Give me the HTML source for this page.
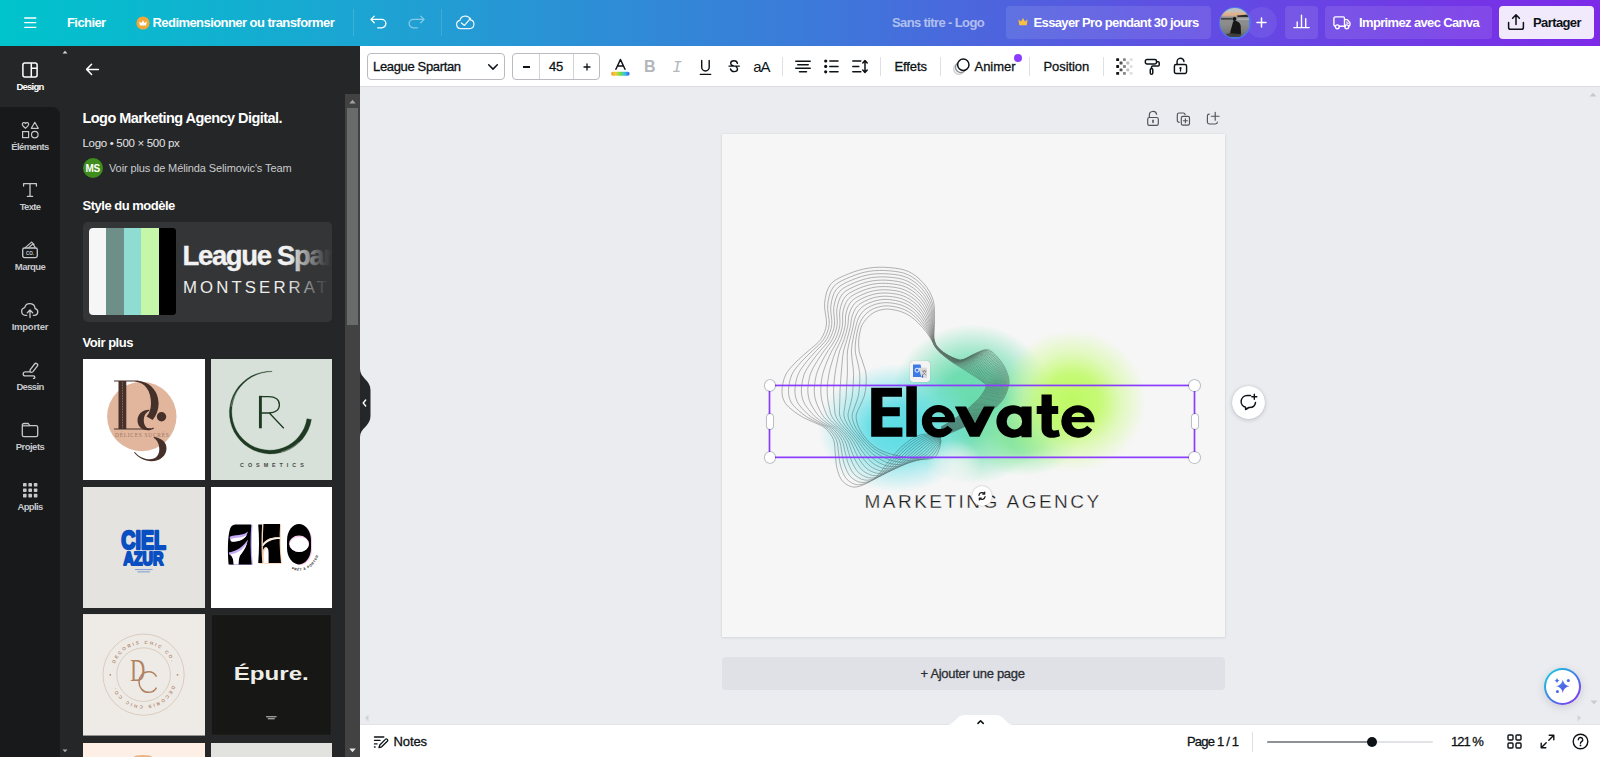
<!DOCTYPE html>
<html lang="fr">
<head>
<meta charset="utf-8">
<title>Sans titre - Logo</title>
<style>
*{box-sizing:border-box;margin:0;padding:0}
html,body{width:1600px;height:757px;overflow:hidden;background:#ebecf0}
body{font-family:"Liberation Sans",sans-serif;position:relative;color:#0d1216}
.abs{position:absolute}
.t{position:absolute;white-space:nowrap;line-height:1}
/* header */
#hdr{left:0;top:0;width:1600px;height:47px;background:linear-gradient(90deg,#00c4cc 0%,#1fa1d3 25%,#3b7bd9 50%,#5d51e2 72%,#7d2ae8 100%)}
#hdr .t{color:#fff;font-weight:bold;font-size:13px}
/* rail */
#rail{left:0;top:46px;width:60px;height:711px}
#rail .act{left:0;top:0;width:60px;height:61px;background:#252627}
#rail .rest{left:0;top:61px;width:60px;height:650px;background:#18191b;border-top-right-radius:8px}
#railbg{left:0;top:46px;width:60px;height:711px;background:#252627}
.rl{position:absolute;left:0;width:60px;text-align:center;font-size:9.500px;font-weight:bold;color:#c6c8cc;line-height:1;white-space:nowrap}
/* panel */
#panel{left:60px;top:46px;width:300px;height:711px;background:#252627;overflow:hidden}
/* toolbar */
#tb{left:360px;top:46px;width:1240px;height:41px;background:#fff;border-bottom:1px solid #dcdde1}
.tt{font-size:13px;color:#0d1216;-webkit-text-stroke:0.3px #0d1216}
/* canvas */
#cv{left:360px;top:87px;width:1240px;height:638px;background:#ebecf0;overflow:hidden}
/* footer */
#ft{left:360px;top:725px;width:1240px;height:32px;background:#fff;box-shadow:0 -1px 0 #e3e4e8}
#ft .t{font-size:13px;color:#0d1216}
.hd{position:absolute;width:10.500px;height:10.500px;border-radius:50%;background:#fff;box-shadow:0 0 0 .8px rgba(57,76,96,.35),0 0 2px rgba(57,76,96,.2)}
.hp{position:absolute;width:6px;height:15px;border-radius:3px;background:#fff;box-shadow:0 0 0 .8px rgba(57,76,96,.35),0 0 2px rgba(57,76,96,.2)}
</style>
</head>
<body>

<!-- HEADER -->
<div id="hdr" class="abs">
  <!-- hamburger -->
  <svg class="abs" style="left:24px;top:16px" width="13" height="13" viewBox="0 0 13 13"><path d="M0.700 2H11.800M0.700 6.600H11.800M0.700 11.300H11.800" stroke="#fff" stroke-width="1.350" stroke-linecap="round" fill="none"/></svg>
  <span class="t" style="left:67px;top:15.5px;letter-spacing:-0.58px">Fichier</span>
  <!-- crown coin -->
  <svg class="abs" style="left:135.5px;top:15.5px" width="14" height="14" viewBox="0 0 14 14"><circle cx="7" cy="7" r="6.6" fill="#f1a83a"/><path d="M3.9 9.6 3.3 5.5 5.4 7 7 4.2 8.6 7 10.7 5.5 10.1 9.6Z" fill="#fff"/></svg>
  <span class="t" style="left:152.5px;top:15.5px;letter-spacing:-0.56px">Redimensionner ou transformer</span>
  <div class="abs" style="left:353px;top:9px;width:1px;height:27px;background:rgba(255,255,255,.14)"></div>
  <!-- undo -->
  <svg class="abs" style="left:369px;top:13px" width="18" height="18" viewBox="0 0 18 18"><path d="M5.250 3.100 1.900 6.400l3.350 3.300M2.300 6.400h10.400a4.200 4.200 0 0 1 0 8.400H8.700" stroke="#fff" stroke-width="1.300" stroke-linecap="round" stroke-linejoin="round" fill="none"/></svg>
  <!-- redo -->
  <svg class="abs" style="left:408px;top:13px;opacity:.45" width="18" height="18" viewBox="0 0 18 18"><path d="M12.750 3.100 16.100 6.400l-3.350 3.300M15.700 6.400H5.300a4.200 4.200 0 0 0 0 8.400H9.300" stroke="#fff" stroke-width="1.300" stroke-linecap="round" stroke-linejoin="round" fill="none"/></svg>
  <div class="abs" style="left:441px;top:9px;width:1px;height:27px;background:rgba(255,255,255,.14)"></div>
  <!-- cloud check -->
  <svg class="abs" style="left:455px;top:12px;opacity:.92" width="20" height="20" viewBox="0 0 20 20"><path d="M5.700 16.600a4.150 4.150 0 0 1-.800-8.200 5.500 5.500 0 0 1 10.500-.600 4.450 4.450 0 0 1-.700 8.800Z" stroke="#fff" stroke-width="1.200" stroke-linejoin="round" fill="none"/><path d="M6.400 10.900l3.100 2.500 6-7.100" stroke="#fff" stroke-width="1.300" stroke-linecap="round" stroke-linejoin="round" fill="none"/></svg>

  <span class="t" style="left:892px;top:15.5px;letter-spacing:-0.62px;color:rgba(255,255,255,.58)">Sans titre - Logo</span>
  <!-- essayer pro -->
  <div class="abs" style="left:1006px;top:6px;width:205px;height:33px;border-radius:4px;background:rgba(255,255,255,.1)"></div>
  <svg class="abs" style="left:1017.5px;top:17px" width="10" height="9" viewBox="0 0 10 9"><path d="M1.3 8.2 0.4 2.6 3 4.6 5 1 7 4.6 9.6 2.6 8.7 8.2Z" fill="#fbbf3f"/></svg>
  <span class="t" style="left:1033.5px;top:15.5px;letter-spacing:-0.63px">Essayer Pro pendant 30 jours</span>
  <!-- avatar -->
  <div class="abs" style="left:1246px;top:7px;width:31px;height:31px;border-radius:50%;background:rgba(255,255,255,.07)"></div>
  <div class="abs" style="left:1218.500px;top:6.500px;width:32px;height:32px;border-radius:50%;background:#4f78ee"></div>
  <svg class="abs" style="left:1219.800px;top:7.700px" width="29.600" height="29.600" viewBox="0 0 30 30"><defs><clipPath id="avc"><circle cx="15" cy="15" r="15"/></clipPath><linearGradient id="avg" x1="0" y1="0" x2="0" y2="1"><stop offset="0" stop-color="#b9c1c4"/><stop offset=".12" stop-color="#c2c2bb"/><stop offset=".18" stop-color="#e0b491"/><stop offset=".27" stop-color="#d4a988"/><stop offset=".30" stop-color="#8f8f90"/><stop offset=".55" stop-color="#8c8c8c"/><stop offset=".8" stop-color="#7b7b7b"/><stop offset="1" stop-color="#5c5c5c"/></linearGradient></defs><g clip-path="url(#avc)"><rect width="30" height="30" fill="url(#avg)"/><path d="M17 7.500 30 6.500V9L18 9.200Z" fill="#2b2b2b"/><path d="M1 10.400h11.500v1.200H1Z" fill="#2a2a2a"/><path d="M16 10.800h14v.9H16Z" fill="#c9ced0"/><circle cx="14.700" cy="11.200" r="2" fill="#141414"/><path d="M13.300 13.700c1.300-.6 2.800-.6 4.200 0 2.200.9 3.300 2.200 3.500 4.600l.3 7.700c-3 1.200-7.500 1.200-11 0l.3-2.500c.8-2.800 1.700-6 2.700-9.800Z" fill="#171717"/><path d="M5 27c3-1.500 6-2 9-1.500l8 1-2 3.500H8Z" fill="#3a3a3a" opacity=".8"/></g></svg>
  <svg class="abs" style="left:1256px;top:17px" width="11" height="11" viewBox="0 0 11 11"><path d="M5.500 1v9M1 5.500h9" stroke="#fff" stroke-width="1.5" stroke-linecap="round"/></svg>
  <!-- chart button -->
  <div class="abs" style="left:1285px;top:6px;width:33px;height:33px;border-radius:4px;background:rgba(255,255,255,.1)"></div>
  <svg class="abs" style="left:1293px;top:13.300px" width="17" height="16" viewBox="0 0 17 16"><path d="M0.800 14.600H16.200M4.200 14.300V9M8.500 14.300V2.200M12.700 14.300V5.600" stroke="#fff" stroke-width="1.400" stroke-linecap="round" fill="none"/></svg>
  <!-- print -->
  <div class="abs" style="left:1325px;top:6px;width:167px;height:33px;border-radius:4px;background:rgba(255,255,255,.1)"></div>
  <svg class="abs" style="left:1332.900px;top:15.400px" width="18.400" height="15.640" viewBox="0 0 20 17"><path d="M1 3.6a1.6 1.6 0 0 1 1.6-1.6h8.3a1.6 1.6 0 0 1 1.6 1.6v8.7H6.9M1 3.6v7.1a1.6 1.6 0 0 0 1.5 1.6M12.5 5h3.1l2.9 3.6v2.1a1.6 1.6 0 0 1-1.5 1.6M12.5 12.3h1" stroke="#fff" stroke-width="1.5" stroke-linejoin="round" stroke-linecap="round" fill="none"/><circle cx="4.7" cy="12.9" r="2.1" stroke="#fff" stroke-width="1.5" fill="none"/><circle cx="15" cy="12.9" r="2.1" stroke="#fff" stroke-width="1.5" fill="none"/><path d="M15.2 7v2h2" stroke="#fff" stroke-width="1.2" fill="none"/></svg>
  <span class="t" style="left:1359px;top:15.5px;letter-spacing:-0.64px">Imprimez avec Canva</span>
  <!-- share -->
  <div class="abs" style="left:1499px;top:6px;width:95px;height:33px;border-radius:4px;background:#f1eafd"></div>
  <svg class="abs" style="left:1507px;top:13px" width="18" height="18" viewBox="0 0 18 18"><path d="M9 11.6V2M5.6 5.2 9 1.8l3.4 3.4M1.6 9.4v5a1.8 1.8 0 0 0 1.8 1.8h11.2a1.8 1.8 0 0 0 1.8-1.8v-5" stroke="#0d1216" stroke-width="1.5" stroke-linecap="round" stroke-linejoin="round" fill="none"/></svg>
  <span class="t" style="left:1533px;top:15.5px;letter-spacing:-0.6px;color:#0d1216">Partager</span>
</div>

<!-- RAIL -->
<div id="railbg" class="abs"></div>
<div id="rail" class="abs">
  <div class="abs act"></div>
  <div class="abs rest"></div>
</div>

<!-- PANEL -->
<div id="panel" class="abs">
</div>


<!-- RAIL CONTENT (page coords) -->
<div id="railx" class="abs" style="left:0;top:0;width:0;height:0">
  <!-- design -->
  <svg class="abs" style="left:22px;top:62px" width="16" height="16" viewBox="0 0 16 16"><rect x="0.900" y="0.900" width="14.200" height="14.200" rx="2" stroke="#fff" stroke-width="1.500" fill="none"/><path d="M9.300 1v14M9.300 6.200H15" stroke="#fff" stroke-width="1.500" fill="none"/></svg>
  <span class="rl" style="top:81.8px;color:#fff;letter-spacing:-0.78px">Design</span>
  <!-- elements -->
  <svg class="abs" style="left:20.500px;top:121px" width="19" height="18" viewBox="0 0 19 18"><path d="M4.500 7.300C2.600 5.900 1.300 4.700 1.300 3.300a1.700 1.700 0 0 1 3.200-.800 1.700 1.700 0 0 1 3.200.800c0 1.400-1.300 2.600-3.200 4Z" stroke="#c6c8cc" stroke-width="1.200" stroke-linejoin="round" fill="none"/><path d="M13.800 1.300 17.300 7.300H10.300Z" stroke="#c6c8cc" stroke-width="1.200" stroke-linejoin="round" fill="none"/><rect x="1.600" y="10.600" width="6" height="6" stroke="#c6c8cc" stroke-width="1.200" fill="none"/><circle cx="13.800" cy="13.600" r="3.300" stroke="#c6c8cc" stroke-width="1.200" fill="none"/></svg>
  <span class="rl" style="top:141.8px;letter-spacing:-0.61px">Éléments</span>
  <!-- texte -->
  <svg class="abs" style="left:22px;top:182px" width="16" height="16" viewBox="0 0 16 16"><path d="M1.600 4V1.700h12.800V4M8 1.700v12.600M5.400 14.400h5.200" stroke="#c6c8cc" stroke-width="1.300" stroke-linecap="round" stroke-linejoin="round" fill="none"/></svg>
  <span class="rl" style="top:201.8px;letter-spacing:-0.68px">Texte</span>
  <!-- marque -->
  <svg class="abs" style="left:21px;top:240px" width="18" height="19" viewBox="0 0 18 19"><rect x="1.700" y="8" width="14.600" height="9.600" rx="1.800" stroke="#c6c8cc" stroke-width="1.300" fill="none"/><path d="M4.300 7.600 10.600 2.100l2.400 2.300M7.600 7.600l4.300-3.600 2.300 3.400" stroke="#c6c8cc" stroke-width="1.200" stroke-linejoin="round" stroke-linecap="round" fill="none"/><text x="9" y="14.600" font-family="Liberation Sans" font-size="4.600" font-weight="bold" fill="#c6c8cc" text-anchor="middle">CO.</text></svg>
  <span class="rl" style="top:261.8px;letter-spacing:-0.58px">Marque</span>
  <!-- importer -->
  <svg class="abs" style="left:20px;top:301px" width="20" height="18" viewBox="0 0 20 18"><path d="M6.800 14.300H5.400a3.900 3.900 0 0 1-.700-7.700 5.300 5.300 0 0 1 10.400 1 3.400 3.400 0 0 1-.300 6.700h-1.500" stroke="#c6c8cc" stroke-width="1.300" stroke-linecap="round" stroke-linejoin="round" fill="none"/><path d="M10 16.600V9.300M7.300 11.700 10 9l2.700 2.700" stroke="#c6c8cc" stroke-width="1.300" stroke-linecap="round" stroke-linejoin="round" fill="none"/></svg>
  <span class="rl" style="top:321.8px;letter-spacing:-0.25px">Importer</span>
  <!-- dessin -->
  <svg class="abs" style="left:21px;top:362px" width="18" height="17" viewBox="0 0 18 17"><path d="M9.300 7.600 13.600 2a1.700 1.700 0 0 1 2.700 2.100L12 9.600a2.600 2.600 0 0 1-2 .700l-.900-.700a2.600 2.600 0 0 1 .200-2Z" stroke="#c6c8cc" stroke-width="1.300" stroke-linejoin="round" fill="none"/><path d="M8.600 9.900H4.200a2 2 0 0 0 0 4h8.300a1.300 1.300 0 0 1 0 2.600" stroke="#c6c8cc" stroke-width="1.300" stroke-linecap="round" fill="none"/></svg>
  <span class="rl" style="top:381.8px;letter-spacing:-0.67px">Dessin</span>
  <!-- projets -->
  <svg class="abs" style="left:21px;top:422px" width="18" height="16" viewBox="0 0 18 16"><path d="M1.300 3.100A1.600 1.600 0 0 1 2.900 1.500h4.400l1.400 2.200h6.400a1.600 1.600 0 0 1 1.600 1.600v7.800a1.600 1.600 0 0 1-1.600 1.600H2.900a1.600 1.600 0 0 1-1.600-1.600Z" stroke="#c6c8cc" stroke-width="1.300" stroke-linejoin="round" fill="none"/><path d="M1.600 3.800h7" stroke="#c6c8cc" stroke-width="1.200" fill="none"/></svg>
  <span class="rl" style="top:441.8px;letter-spacing:-0.50px">Projets</span>
  <!-- applis -->
  <svg class="abs" style="left:23px;top:483px" width="15" height="15" viewBox="0 0 15 15"><g fill="#c6c8cc"><rect x="0" y="0" width="3.600" height="3.600" rx=".7"/><rect x="5.400" y="0" width="3.600" height="3.600" rx=".7"/><rect x="10.800" y="0" width="3.600" height="3.600" rx=".7"/><rect x="0" y="5.400" width="3.600" height="3.600" rx=".7"/><rect x="5.400" y="5.400" width="3.600" height="3.600" rx=".7"/><rect x="10.800" y="5.400" width="3.600" height="3.600" rx=".7"/><rect x="0" y="10.800" width="3.600" height="3.600" rx=".7"/><rect x="5.400" y="10.800" width="3.600" height="3.600" rx=".7"/><rect x="10.800" y="10.800" width="3.600" height="3.600" rx=".7"/></g></svg>
  <span class="rl" style="top:501.8px;letter-spacing:-0.67px">Applis</span>
</div>

<!-- PANEL CONTENT (page coords) -->
<div id="panelx" class="abs" style="left:0;top:0;width:0;height:0">
  <svg class="abs" style="left:62px;top:50px" width="6" height="4" viewBox="0 0 6 4"><path d="M0.500 3.500 3 .800 5.500 3.500Z" fill="#d6d7d9"/></svg>
  <!-- back arrow -->
  <svg class="abs" style="left:85px;top:62px" width="15" height="15" viewBox="0 0 15 15"><path d="M6.600 2.300 1.600 7.400l5 5.100M2 7.400h11.400" stroke="#fff" stroke-width="1.500" stroke-linecap="round" stroke-linejoin="round" fill="none"/></svg>
  <span class="t" style="left:82.500px;top:110.800px;font-size:14.500px;font-weight:bold;color:#fff;letter-spacing:-0.560px">Logo Marketing Agency Digital.</span>
  <span class="t" style="left:82.500px;top:137.800px;font-size:11.500px;color:#e4e5e7;letter-spacing:-0.310px">Logo • 500 × 500 px</span>
  <div class="abs" style="left:82.500px;top:158px;width:20px;height:20px;border-radius:50%;background:#3f8d1d"></div>
  <span class="t" style="left:85.500px;top:163.500px;font-size:10px;font-weight:bold;color:#fff;letter-spacing:-0.300px">MS</span>
  <span class="t" style="left:109px;top:162.500px;font-size:11px;color:#c9cbce;letter-spacing:-0.110px">Voir plus de Mélinda Selimovic's Team</span>
  <span class="t" style="left:82.500px;top:198.500px;font-size:13px;font-weight:bold;color:#fff;letter-spacing:-0.490px">Style du modèle</span>
  <!-- style card -->
  <div class="abs" style="left:82.500px;top:221.500px;width:249.500px;height:100px;border-radius:5px;background:#343536;overflow:hidden">
    <div class="abs" style="left:6.500px;top:6.500px;width:87px;height:87px;border-radius:4px;overflow:hidden;background:#000">
      <div class="abs" style="left:0;top:0;width:17.400px;height:87px;background:#f6f6f6"></div>
      <div class="abs" style="left:17.400px;top:0;width:17.400px;height:87px;background:#6e8f88"></div>
      <div class="abs" style="left:34.800px;top:0;width:17.400px;height:87px;background:#8fdcd3"></div>
      <div class="abs" style="left:52.200px;top:0;width:17.400px;height:87px;background:#c5f7a8"></div>
      <div class="abs" style="left:69.600px;top:0;width:17.400px;height:87px;background:#000"></div>
    </div>
    <span class="t" style="left:100px;top:20.300px;font-size:27.500px;font-weight:bold;color:#f2f2f2;letter-spacing:-1.350px;-webkit-text-stroke:.35px #f2f2f2">League Spartan</span>
    <span class="t" style="left:100.500px;top:58.300px;font-size:16.800px;color:#ececec;letter-spacing:3.100px">MONTSERRAT</span>
    <div class="abs" style="left:205px;top:0;width:45px;height:100px;background:linear-gradient(90deg,rgba(52,53,54,0) 0%,rgba(52,53,54,.9) 80%,#343536 100%)"></div>
  </div>
  <span class="t" style="left:82.500px;top:335.500px;font-size:13px;font-weight:bold;color:#fff;letter-spacing:-0.460px">Voir plus</span>
  <!-- scrollbar -->
  <div class="abs" style="left:345px;top:93.500px;width:15px;height:664px;background:#424242"></div>
  <div class="abs" style="left:347px;top:107.500px;width:11px;height:217.500px;background:#696a6a"></div>
  <svg class="abs" style="left:349px;top:98.500px" width="7" height="5" viewBox="0 0 7 5"><path d="M0.300 4.500 3.500 .700 6.700 4.500Z" fill="#a3a3a3"/></svg>
  <svg class="abs" style="left:349px;top:747.500px" width="7" height="5" viewBox="0 0 7 5"><path d="M0.300 .500 3.500 4.300 6.700 .500Z" fill="#e6e6e6"/></svg>
  <svg class="abs" style="left:62px;top:748.500px" width="6" height="4" viewBox="0 0 6 4"><path d="M0.500 .500 3 3.200 5.500 .500Z" fill="#aaabad"/></svg>
</div>


<!-- THUMBNAILS (page coords) -->
<div id="thx" class="abs" style="left:0;top:0;width:0;height:0">
  <!-- 1 DG -->
  <svg class="abs" style="left:82.500px;top:358.500px" width="122" height="121.500" viewBox="0 0 122 121.500">
    <rect width="122" height="121.500" fill="#fff"/>
    <circle cx="58.800" cy="57.500" r="34.700" fill="#e1b69d"/>
    <g fill="#46302a">
      <path d="M31 21.400H52C65 21.400 75.600 30.500 75.600 44.500c0 6.500-2.300 12-6 16.500l-6-3.500c3-3.500 4.400-8 4.400-13.500 0-11.500-5.500-21-16.500-21.600H43.300V69.400H68v1H31v-1h4.500V22.400H31Z"/>
      <circle cx="78.500" cy="57.700" r="4.700"/>
      <path d="M66 50.700c-6.500 0-11.500 4.500-11.500 10.700 0 5.800 4.500 9.800 10.300 9.800 2.300 0 4.500-.6 6.200-1.800l-.6-.9c-1 .6-2.300.9-3.600.9-3.600 0-6-3.300-6-8 0-4.500 2-8.500 5.800-9.700Z"/>
      <path transform="translate(-1 -2.300)" d="M72.500 80.300c7 1.200 12 5.200 12 11.200 0 7.600-6.600 13-15 13-7 0-13.500-3.500-17.500-8.700l.8-.6c3.600 4.300 9 7.300 15 7.300 6 0 9.500-4.300 9.500-9.800 0-5.400-2.300-9.700-6-11.600Z"/>
    </g>
    <path d="M39.500 23v46" stroke="#e1b69d" stroke-width=".5" stroke-dasharray=".8 .8"/>
    <text x="59.300" y="77.500" font-family="Liberation Serif" font-size="5.400" fill="#9a7560" text-anchor="middle" letter-spacing=".750">DÉLICES SUCRÉS</text>
  </svg>
  <!-- 2 R cosmetics -->
  <svg class="abs" style="left:211px;top:358.500px" width="121" height="121.500" viewBox="0 0 121 121.500">
    <rect width="121" height="121.500" fill="#d7e1d9"/>
    <path d="M61.1 12.3 55.7 12.5 50.4 13.4 45.2 14.9 40.3 17.1 35.7 20.0 31.5 23.4 27.8 27.3 24.7 31.7 22.1 36.5 20.2 41.5 19.0 46.8 18.4 52.2 18.6 57.6 19.5 62.9 21.0 68.1 23.2 73.0 26.1 77.6 29.5 81.8 33.4 85.5 37.8 88.6 42.6 91.2 47.6 93.1 52.9 94.3 58.3 94.9 63.7 94.7 69.0 93.8 74.2 92.3 79.1 90.1 83.7 87.2 87.9 83.8 91.6 79.9 94.7 75.5 97.3 70.7 99.2 65.7 100.4 60.4 100.4 60.4 L95.9 59.7 95.9 59.7 94.9 64.3 93.2 68.9 91.0 73.1 88.2 77.1 85.0 80.7 81.3 83.8 77.2 86.5 72.8 88.6 68.1 90.1 63.3 91.0 58.4 91.2 53.5 90.8 48.6 89.8 43.9 88.2 39.5 85.9 35.4 83.1 31.7 79.8 28.4 75.9 25.6 71.7 23.5 67.2 21.9 62.3 21.0 57.3 20.7 52.2 21.1 47.1 22.2 42.1 23.8 37.3 26.1 32.6 29.0 28.3 32.4 24.4 36.4 20.9 40.8 18.0 45.5 15.7 50.6 14.0 55.8 13.0 61.1 12.6Z" fill="#1e3a22" stroke="#1e3a22" stroke-width=".3" stroke-linejoin="round"/>
    <path d="M28 30c-4 5-7 11-8 18M30 88c5 3 11 5.500 17 6.300M70 93c7-2 13-5 18-10" stroke="#d7e1d9" stroke-width=".5" fill="none" opacity=".7"/>
    <path d="M49.400 69.300V36.800" stroke="#1e3a22" stroke-width="2.900" fill="none"/>
    <path d="M49.200 37.600h8.600c6.600 0 10.600 3.100 10.600 8.200s-4 8.200-10.600 8.200H49.200M58.300 54 72.800 69.300" stroke="#1e3a22" stroke-width="1.300" fill="none"/>
    <text x="62.900" y="107.900" font-family="Liberation Sans" font-size="5.400" font-weight="bold" fill="#454845" text-anchor="middle" letter-spacing="3.950">COSMETICS</text>
  </svg>
  <!-- 3 ciel azur -->
  <svg class="abs" style="left:82.500px;top:487px" width="122" height="121" viewBox="0 0 122 121">
    <rect width="122" height="121" fill="#e4e3df"/>
    <g font-family="Liberation Sans" font-weight="bold" fill="#0a4fc2" stroke="#0a4fc2" stroke-linejoin="round" text-anchor="middle">
      <text x="60.600" y="62" font-size="25.500" stroke-width="2.400" textLength="44.500" lengthAdjust="spacingAndGlyphs">CIEL</text>
      <text x="60.400" y="78.200" font-size="17.800" stroke-width="2.100" textLength="40" lengthAdjust="spacingAndGlyphs">AZUR</text>
    </g>
    <rect x="52" y="82" width="17.500" height="1.100" fill="#2a63c9" opacity=".5"/>
    <rect x="54.500" y="84.300" width="12.500" height="1.100" fill="#2a63c9" opacity=".5"/>
  </svg>
  <!-- 4 AKO -->
  <svg class="abs" style="left:211px;top:487px" width="121" height="121" viewBox="0 0 121 121">
    <rect width="121" height="121" fill="#fff"/>
    <!-- A -->
    <path d="M17.600 77.400C16.500 65 16.500 50 19 42C20 38.500 22.500 37.400 25.300 37.400H40.300C39.300 50 39.300 65 40.600 77.400Z" fill="#c3a9f6" transform="translate(1.200 .700)"/>
    <path d="M17.600 77.400C16.500 65 16.500 50 19 42C20 38.500 22.500 37.400 25.300 37.400H40.300C39.300 50 39.300 65 40.600 77.400Z" fill="#000"/>
    <path d="M18.800 49.800C24 47 32 49.300 36.900 44.500C35.800 51.500 28 55 20 54.600C19 53.300 18.700 51.500 18.800 49.800Z" fill="#c3a9f6"/>
    <path d="M19.800 52C25 50.300 31 51.300 35.800 48C33.800 52.500 27 55 20.500 54.600Z" fill="#fff"/>
    <path d="M18 65.500C26 64 33 59 36.900 52.500C36 60 31 66 28.700 69C27.800 72 27.500 75 27.500 77.400H22.700C22.600 73 21.500 69 18 67.300Z" fill="#c3a9f6"/>
    <path d="M19.500 67.300C27 66.300 32.500 62 35.800 56.300C34.500 62 30.500 66.500 28.700 69C27.800 72 27.500 75 27.500 77.400H22.700C22.600 73 21.800 69.500 19.500 67.300Z" fill="#fff"/>
    <!-- K -->
    <g transform="translate(1.100 .700)" fill="#f9d2ad"><path d="M47.200 37.400H51.100C50.300 50 50.300 64 51.300 76H47.200C48.300 63 48.300 50 47.200 37.400Z"/><path d="M52.400 37H69.100C68.300 50 68.500 63 70 76H52.200C51.700 63 51.700 50 52.400 37Z"/></g>
    <path d="M47.200 37.400H51.100C50.300 50 50.300 64 51.300 76H47.200C48.300 63 48.300 50 47.200 37.400Z" fill="#000"/>
    <path d="M52.400 37H69.100C68.300 50 68.500 63 70 76H52.200C51.700 63 51.700 50 52.400 37Z" fill="#000"/>
    <path d="M51.700 57.500C54 52.500 60 50 69 50.200L69 52C61 52 55.500 54.500 52 59.500Z" fill="#fff"/>
    <path d="M51.700 57.500C54 52.500 60 50 69 50.200L69 50.900C60.500 50.800 54.500 53.300 51.800 58.500Z" fill="#f9d2ad"/>
    <path d="M52 76V66C52 62 53.500 60.300 55 60.300C56.700 60.300 57.600 62.500 57.600 66V76Z" fill="#fff"/>
    <path d="M52 66C52 62 53.500 60.300 55 60.300C55.600 60.300 56 60.500 56.400 61C54.500 61.300 53 63 52.800 66.500V76H52Z" fill="#f9d2ad"/>
    <!-- O -->
    <rect x="77.100" y="37.700" width="24" height="40.400" rx="12" ry="16.500" fill="#f6c9ea"/>
    <rect x="76" y="37" width="24" height="40.400" rx="12" ry="16.500" fill="#000"/>
    <ellipse cx="88" cy="56.800" rx="9.900" ry="8.200" fill="#f6c9ea"/>
    <ellipse cx="88.300" cy="57.500" rx="9.500" ry="7.600" fill="#fff"/>
    <path id="pp" d="M79.500 81.500c13 7 27-3 28.500-16.500" fill="none"/>
    <text font-family="Liberation Sans" font-size="3.400" font-weight="bold" fill="#222" letter-spacing=".550"><textPath href="#pp" startOffset="1">PRÊT À PORTER</textPath></text>
  </svg>
  <!-- 5 DC -->
  <svg class="abs" style="left:82.600px;top:614.400px" width="122" height="121.600" viewBox="0 0 122 121.500">
    <rect width="122" height="121.500" fill="#eeebe7"/>
    <circle cx="60.600" cy="60.600" r="40.600" stroke="#cdb5a1" stroke-width=".600" fill="none"/>
    <circle cx="60.600" cy="60.600" r="26.800" stroke="#cdb5a1" stroke-width=".600" fill="none"/>
    <path id="dcT" d="M29.800 60.600a30.800 30.800 0 0 1 61.600 0" fill="none"/>
    <path id="dcB" d="M91.400 60.600a30.800 30.800 0 0 1-61.600 0" fill="none"/>
    <g font-family="Liberation Sans" font-size="4.700" font-weight="bold" fill="#b58d72" letter-spacing="1.900">
      <text><textPath href="#dcT" startOffset="11">DECORIS CHIC CO.</textPath></text>
      <text><textPath href="#dcB" startOffset="11">DECORIS CHIC CO.</textPath></text>
    </g>
    <circle cx="27.300" cy="60.800" r=".900" fill="#b58d72"/><circle cx="94.500" cy="60.800" r=".900" fill="#b58d72"/>
    <text x="47.300" y="67.300" font-family="Liberation Serif" font-size="31" fill="#b08363" textLength="15" lengthAdjust="spacingAndGlyphs">D</text>
    <path d="M73.500 62.500c-1.600-3-4.500-4.800-8-4.800-5.500 0-9.500 4.500-9.500 10.300s4 10.300 9.500 10.300c3.500 0 6.400-1.800 8-4.800" stroke="#b08363" stroke-width="1.500" fill="none"/>
  </svg>
  <!-- 6 Epure -->
  <svg class="abs" style="left:211.300px;top:614.200px" width="120.500" height="121.800" viewBox="0 0 121 121.500">
    <rect width="121" height="121.500" fill="#2a2b2b"/>
    <rect x=".700" y=".700" width="119.600" height="120.100" fill="#171715"/>
    <text x="60.500" y="66" font-family="Liberation Sans" font-weight="bold" font-size="18" fill="#eeeee9" text-anchor="middle" textLength="75.500" lengthAdjust="spacingAndGlyphs">Épure.</text>
    <rect x="55.300" y="102.300" width="10.500" height="1" fill="#cfcfca"/><rect x="57" y="104.300" width="7" height="1" fill="#cfcfca"/>
  </svg>
  <!-- 7, 8 -->
  <div class="abs" style="left:82.500px;top:743px;width:122px;height:20px;background:#fdeee6"></div>
  <div class="abs" style="left:134px;top:755px;width:18px;height:4px;border-radius:50%;background:#e9b382"></div>
  <div class="abs" style="left:211px;top:743px;width:121px;height:20px;background:#e2e2de"></div>
</div>

<!-- TOOLBAR -->
<div id="tb" class="abs">
</div>


<!-- TOOLBAR CONTENT (page coords) -->
<div id="tbx" class="abs" style="left:0;top:0;width:0;height:0">
  <div class="abs" style="left:367px;top:53px;width:138px;height:27px;border:1px solid #b9bbc0;border-radius:4px;background:#fff"></div>
  <span class="t tt" style="left:373px;top:60px;letter-spacing:-0.34px">League Spartan</span>
  <svg class="abs" style="left:487px;top:63px" width="12" height="8" viewBox="0 0 12 8"><path d="M1.7 1.8 6 6.1l4.3-4.3" stroke="#0d1216" stroke-width="1.5" stroke-linecap="round" stroke-linejoin="round" fill="none"/></svg>
  <div class="abs" style="left:512px;top:53px;width:88px;height:27px;border:1px solid #b9bbc0;border-radius:4px;background:#fff"></div>
  <div class="abs" style="left:539px;top:54px;width:1px;height:25px;background:#d2d4d8"></div>
  <div class="abs" style="left:573px;top:54px;width:1px;height:25px;background:#d2d4d8"></div>
  <div class="abs" style="left:522.5px;top:66px;width:7px;height:1.5px;background:#0d1216"></div>
  <span class="t tt" style="left:549px;top:60px;letter-spacing:-0.2px">45</span>
  <svg class="abs" style="left:581.500px;top:62px" width="10" height="10" viewBox="0 0 10 10"><path d="M2 5h6M5 2v6" stroke="#0d1216" stroke-width="1.300" stroke-linecap="round"/></svg>
  <!-- text colour A -->
  <svg class="abs" style="left:610px;top:58px" width="21" height="19" viewBox="0 0 21 19"><path d="M5.900 11.300 10.450 1.500 15 11.300M7.400 8.100h6.100" stroke="#0d1216" stroke-width="1.500" stroke-linejoin="round" stroke-linecap="round" fill="none"/><defs><linearGradient id="rb" x1="0" x2="1" y1="0" y2="0"><stop offset="0" stop-color="#f59a3c"/><stop offset=".25" stop-color="#f3cf2c"/><stop offset=".5" stop-color="#6fdc4a"/><stop offset=".75" stop-color="#2fc4e6"/><stop offset="1" stop-color="#3a55e8"/></linearGradient></defs><rect x="1" y="13.800" width="18.600" height="4" rx="2" fill="url(#rb)"/></svg>
  <!-- B -->
  <span class="t" style="left:644px;top:59.300px;font-size:16px;font-weight:bold;color:#b3b6ba;letter-spacing:-1px">B</span>
  <!-- I -->
  <span class="t" style="left:672.300px;top:60px;font-size:16px;font-style:italic;color:#b3b6ba;font-family:'Liberation Mono',monospace">I</span>
  <!-- U -->
  <svg class="abs" style="left:699px;top:59px" width="13" height="17" viewBox="0 0 13 17"><path d="M2.700 1.500v6.700a3.750 3.750 0 0 0 7.500 0V1.500M1.300 15.400h10.400" stroke="#0d1216" stroke-width="1.400" stroke-linecap="round" fill="none"/></svg>
  <!-- S -->
  <svg class="abs" style="left:727px;top:59px" width="14" height="15" viewBox="0 0 14 15"><path d="M10.400 4.300C10.100 2.700 8.800 1.800 7 1.800c-1.900 0-3.300.9-3.300 2.500 0 1.400 1 2.100 2.900 2.600M3.500 10c.4 1.700 1.700 2.600 3.600 2.600s3.400-.9 3.400-2.600c0-.9-.4-1.500-1.200-2M2 7.100h10.300" stroke="#0d1216" stroke-width="1.400" stroke-linecap="round" fill="none"/></svg>
  <!-- aA -->
  <span class="t" style="left:753.300px;top:59.200px;font-size:15px;letter-spacing:-1.100px;color:#0d1216">aA</span>
  <div class="abs" style="left:782px;top:57px;width:1px;height:19px;background:#dfe0e3"></div>
  <!-- align -->
  <svg class="abs" style="left:795px;top:60px" width="16" height="13" viewBox="0 0 16 13"><path d="M0.8 1.2h14.4M2.8 4.7h10.400M0.800 8.200h14.400M4.500 11.700h7" stroke="#0d1216" stroke-width="1.5" stroke-linecap="round" fill="none"/></svg>
  <!-- bullets -->
  <svg class="abs" style="left:823.5px;top:59px" width="15" height="15" viewBox="0 0 15 15"><circle cx="1.7" cy="2" r="1.600" fill="#0d1216"/><circle cx="1.7" cy="7.400" r="1.600" fill="#0d1216"/><circle cx="1.7" cy="12.800" r="1.600" fill="#0d1216"/><path d="M5.800 2h8.200M5.800 7.400h8.200M5.800 12.800h8.200" stroke="#0d1216" stroke-width="1.5" stroke-linecap="round" fill="none"/></svg>
  <!-- spacing -->
  <svg class="abs" style="left:851.5px;top:59px" width="17" height="15" viewBox="0 0 17 15"><path d="M0.800 2h8M0.800 7.400h6M0.800 12.800h8M13 1.800v11.400M10.800 4 13 1.600 15.200 4M10.800 11 13 13.400 15.200 11" stroke="#0d1216" stroke-width="1.5" stroke-linecap="round" stroke-linejoin="round" fill="none"/></svg>
  <div class="abs" style="left:880px;top:57px;width:1px;height:19px;background:#dfe0e3"></div>
  <span class="t tt" style="left:894.5px;top:60px;letter-spacing:-0.12px">Effets</span>
  <div class="abs" style="left:940px;top:57px;width:1px;height:19px;background:#dfe0e3"></div>
  <!-- animer icon -->
  <svg class="abs" style="left:952px;top:57px" width="19" height="19" viewBox="0 0 19 19"><circle cx="7" cy="12" r="5.300" stroke="#c9cbcf" stroke-width="1.300" fill="none"/><circle cx="8.800" cy="10.300" r="5.300" stroke="#8d9095" stroke-width="1.300" fill="#fff"/><circle cx="11.300" cy="7.700" r="5.700" stroke="#0d1216" stroke-width="1.500" fill="#fff"/></svg>
  <span class="t tt" style="left:974.5px;top:60px;letter-spacing:-0.03px">Animer</span>
  <div class="abs" style="left:1014px;top:53.500px;width:8px;height:8px;border-radius:50%;background:#8b3dff"></div>
  <div class="abs" style="left:1029px;top:57px;width:1px;height:19px;background:#dfe0e3"></div>
  <span class="t tt" style="left:1043.500px;top:60px;letter-spacing:-0.09px">Position</span>
  <div class="abs" style="left:1103px;top:57px;width:1px;height:19px;background:#dfe0e3"></div>
  <!-- transparency -->
  <svg class="abs" style="left:1115.500px;top:58px" width="18" height="18" viewBox="0 0 18 18"><g fill="#0d1216"><rect x="0.20" y="0.20" width="2.900" height="2.900" rx=".6" opacity="1"/><rect x="0.20" y="7.04" width="2.900" height="2.900" rx=".6" opacity="1"/><rect x="0.20" y="13.88" width="2.900" height="2.900" rx=".6" opacity="1"/><rect x="3.58" y="3.62" width="2.900" height="2.900" rx=".6" opacity="0.72"/><rect x="3.58" y="10.46" width="2.900" height="2.900" rx=".6" opacity="0.72"/><rect x="6.96" y="0.20" width="2.900" height="2.900" rx=".6" opacity="0.5"/><rect x="6.96" y="7.04" width="2.900" height="2.900" rx=".6" opacity="0.5"/><rect x="6.96" y="13.88" width="2.900" height="2.900" rx=".6" opacity="0.5"/><rect x="10.34" y="3.62" width="2.900" height="2.900" rx=".6" opacity="0.27"/><rect x="10.34" y="10.46" width="2.900" height="2.900" rx=".6" opacity="0.27"/><rect x="13.72" y="0.20" width="2.900" height="2.900" rx=".6" opacity="0.13"/><rect x="13.72" y="7.04" width="2.900" height="2.900" rx=".6" opacity="0.13"/><rect x="13.72" y="13.88" width="2.900" height="2.900" rx=".6" opacity="0.13"/></g></svg>
  <!-- roller -->
  <svg class="abs" style="left:1144px;top:57.500px" width="17" height="18" viewBox="0 0 19 20"><rect x="1.500" y="1.600" width="12.500" height="5" rx="1.800" stroke="#0d1216" stroke-width="1.650" fill="none"/><path d="M14 4.100h1.800a1.200 1.200 0 0 1 1.200 1.200v2.400a1.200 1.200 0 0 1-1.200 1.200H9.600a1.200 1.200 0 0 0-1.200 1.200v1.500" stroke="#0d1216" stroke-width="1.650" fill="none" stroke-linecap="round"/><rect x="7" y="11.600" width="2.800" height="6.600" rx="1.400" stroke="#0d1216" stroke-width="1.650" fill="none"/></svg>
  <!-- lock -->
  <svg class="abs" style="left:1173px;top:56.500px" width="15" height="18" viewBox="0 0 17 20"><rect x="1.600" y="8.400" width="13.800" height="10" rx="1.800" stroke="#0d1216" stroke-width="1.650" fill="none"/><path d="M4.600 8.200V5.400a3.900 3.900 0 0 1 7.800-.500" stroke="#0d1216" stroke-width="1.650" stroke-linecap="round" fill="none"/><circle cx="8.500" cy="12.400" r="1.300" fill="#0d1216"/><path d="M8.500 12.700v3" stroke="#0d1216" stroke-width="1.500" stroke-linecap="round"/></svg>
</div>

<!-- CANVAS -->
<div id="cv" class="abs">
</div>

<!-- FOOTER -->
<div id="ft" class="abs">
</div>


<!-- CANVAS CONTENT (page coords) -->
<div id="cvx" class="abs" style="left:0;top:0;width:0;height:0">
  <!-- page -->
  <div class="abs" style="left:722px;top:134px;width:503px;height:503px;background:#f6f6f6;box-shadow:0 0 1px rgba(0,0,0,.12),0 1px 3px rgba(60,64,80,.10);overflow:hidden">
    <!-- blobs (page-local coords = page coords - (722,134)) -->
    <div class="abs" style="left:168px;top:190px;width:164px;height:160px;border-radius:50%;background:radial-gradient(closest-side,rgba(103,219,172,1) 0%,rgba(106,220,174,.95) 42%,rgba(120,224,182,.55) 72%,rgba(140,230,190,0) 100%)"></div>
    <div class="abs" style="left:96px;top:230px;width:160px;height:128px;border-radius:50%;background:radial-gradient(closest-side,rgba(90,220,228,1) 0%,rgba(96,221,229,.93) 35%,rgba(118,226,233,.55) 65%,rgba(150,232,236,0) 100%)"></div>
    <div class="abs" style="left:248px;top:262px;width:110px;height:80px;border-radius:50%;background:radial-gradient(closest-side,rgba(128,228,150,.95) 0%,rgba(135,230,155,.8) 40%,rgba(150,235,165,.4) 70%,rgba(160,238,175,0) 100%)"></div>
    <div class="abs" style="left:276px;top:196px;width:148px;height:142px;border-radius:50%;background:radial-gradient(closest-side,rgba(190,249,100,1) 0%,rgba(194,250,108,.92) 38%,rgba(206,251,140,.55) 66%,rgba(225,252,190,0) 100%)"></div>
    <div class="abs" style="left:204px;top:306px;width:56px;height:50px;border-radius:50%;background:radial-gradient(closest-side,rgba(246,246,246,.75) 0%,rgba(246,246,246,.5) 50%,rgba(246,246,246,0) 100%)"></div>
  </div>
  <!-- wave -->
  <svg class="abs" style="left:0;top:0" width="1600" height="757" viewBox="0 0 1600 757"><g fill="none" stroke="#2b2b2b" stroke-width=".55" opacity=".62">
<path d="M941.0 435.0C937.5 435.0 926.6 433.1 920.2 434.9C913.7 436.7 907.7 441.5 902.4 446.0C897.1 450.5 892.9 456.4 888.3 461.8C883.8 467.1 880.3 473.9 874.9 478.1C869.5 482.3 861.3 486.4 856.0 487.0C850.7 487.6 846.1 484.6 842.9 481.5C839.7 478.4 838.3 473.0 837.0 468.4C835.8 463.8 835.9 458.8 835.3 454.0C834.7 449.1 835.2 443.9 833.5 439.5C831.8 435.2 828.2 430.8 825.0 428.0C821.8 425.2 817.9 424.3 814.3 422.5C810.7 420.8 806.9 419.5 803.4 417.5C799.9 415.6 796.5 413.4 793.4 410.9C790.3 408.4 786.8 405.8 784.9 402.5C783.0 399.2 781.9 395.6 782.0 391.0C782.1 386.4 783.3 379.7 785.6 374.9C788.0 370.0 792.3 365.9 796.1 361.9C799.9 357.9 804.5 354.5 808.6 350.7C812.7 346.9 817.8 343.7 820.8 339.3C823.7 334.8 825.9 330.0 826.5 324.0C827.1 318.0 823.9 309.9 824.6 303.3C825.3 296.6 826.7 289.1 830.7 284.2C834.7 279.3 842.3 276.5 848.7 273.8C855.0 271.2 861.8 269.1 868.6 268.1C875.4 267.0 882.8 267.0 889.4 267.6C896.0 268.2 902.7 268.9 908.4 271.5C914.1 274.1 919.5 278.6 923.6 283.3C927.8 288.1 931.4 294.1 933.2 300.2C935.0 306.2 934.4 313.1 934.5 319.6C934.7 326.0 933.6 334.6 934.0 339.0C934.4 343.4 935.4 344.1 936.8 346.1C938.2 348.2 940.3 349.9 942.3 351.5C944.3 353.1 946.5 354.4 948.8 355.7C951.0 356.9 953.4 358.1 955.8 358.8C958.3 359.5 960.1 360.9 963.4 360.0C966.7 359.1 971.3 355.2 975.3 353.5C979.4 351.8 984.0 348.9 987.8 349.7C991.6 350.5 995.4 354.9 998.4 358.3C1001.4 361.6 1004.1 365.6 1005.8 369.7C1007.6 373.9 1009.5 378.1 1009.0 383.0C1008.5 387.9 1006.2 394.7 1003.1 399.4C999.9 404.2 994.8 408.0 990.2 411.6C985.6 415.3 980.5 418.4 975.4 421.4C970.2 424.3 964.8 426.6 959.4 429.1C954.0 431.5 945.7 434.8 943.0 436.0"/>
<path d="M941.0 435.5C937.8 435.6 927.6 434.2 921.6 436.1C915.6 438.0 910.0 442.6 904.9 446.9C899.8 451.1 895.7 456.6 891.2 461.6C886.8 466.5 883.3 472.7 878.1 476.6C872.9 480.4 865.2 484.3 860.0 484.7C854.8 485.2 850.3 482.5 847.1 479.5C844.0 476.6 842.4 471.6 841.0 467.2C839.5 462.9 839.4 458.2 838.6 453.6C837.8 449.0 838.1 444.0 836.3 439.8C834.6 435.7 831.1 431.4 828.0 428.6C824.9 425.7 821.1 424.7 817.7 422.8C814.3 421.0 810.7 419.4 807.5 417.4C804.3 415.3 801.3 413.0 798.6 410.5C795.8 407.9 792.7 405.3 791.0 402.0C789.3 398.6 788.3 395.1 788.5 390.5C788.6 386.0 789.7 379.5 791.8 374.7C793.9 370.0 797.8 365.9 801.2 361.9C804.7 357.9 808.7 354.5 812.5 350.7C816.2 347.0 820.9 343.7 823.7 339.3C826.5 334.9 828.5 330.1 829.2 324.3C829.8 318.5 826.9 310.9 827.7 304.7C828.4 298.4 829.8 291.3 833.6 286.6C837.5 282.0 844.7 279.3 850.7 276.8C856.7 274.2 863.2 272.2 869.7 271.2C876.1 270.3 883.0 270.2 889.4 270.8C895.8 271.4 902.3 272.1 907.8 274.6C913.3 277.1 918.6 281.3 922.6 285.9C926.6 290.4 930.2 296.2 932.0 302.0C933.9 307.7 933.6 314.3 933.9 320.5C934.2 326.7 933.4 334.8 933.8 339.1C934.3 343.4 935.3 344.1 936.6 346.1C938.0 348.2 940.0 349.8 942.0 351.4C943.9 353.0 946.1 354.4 948.3 355.6C950.5 356.8 952.8 358.0 955.2 358.8C957.5 359.5 959.4 360.9 962.5 360.2C965.7 359.4 970.1 355.9 974.1 354.5C978.0 353.0 982.4 350.5 986.1 351.3C989.9 352.2 993.5 356.4 996.4 359.6C999.4 362.8 1002.1 366.6 1003.9 370.5C1005.7 374.5 1007.7 378.5 1007.2 383.2C1006.8 388.0 1004.4 394.6 1001.3 399.2C998.2 403.9 993.3 407.6 988.8 411.1C984.3 414.7 979.3 417.9 974.3 420.7C969.3 423.6 964.0 426.0 958.8 428.4C953.5 430.8 945.5 434.2 942.8 435.3"/>
<path d="M941.0 435.9C938.0 436.1 928.7 435.2 923.1 437.2C917.5 439.2 912.2 443.7 907.4 447.7C902.5 451.8 898.4 456.8 894.1 461.4C889.8 466.0 886.4 471.6 881.4 475.1C876.4 478.6 869.0 482.1 864.0 482.5C859.0 482.9 854.6 480.3 851.4 477.6C848.2 474.8 846.5 470.1 844.9 466.1C843.3 462.0 842.9 457.6 841.9 453.2C841.0 448.9 841.0 444.1 839.2 440.1C837.3 436.1 834.0 432.0 830.9 429.2C827.9 426.3 824.3 425.1 821.1 423.1C817.8 421.1 814.4 419.4 811.5 417.2C808.6 415.1 806.1 412.7 803.7 410.1C801.3 407.4 798.6 404.8 797.1 401.4C795.7 398.1 794.8 394.5 794.9 390.1C795.1 385.6 796.1 379.3 798.0 374.6C799.9 369.9 803.3 365.9 806.4 361.9C809.4 358.0 813.0 354.5 816.3 350.7C819.7 347.0 824.0 343.6 826.6 339.3C829.2 334.9 831.1 330.1 831.8 324.6C832.5 319.0 830.0 312.0 830.8 306.0C831.6 300.1 832.9 293.4 836.6 289.1C840.3 284.7 847.1 282.1 852.7 279.7C858.4 277.2 864.6 275.4 870.7 274.4C876.8 273.5 883.3 273.5 889.4 274.0C895.5 274.5 901.8 275.2 907.2 277.6C912.5 280.0 917.6 284.0 921.6 288.4C925.5 292.7 929.0 298.2 930.9 303.7C932.8 309.2 932.7 315.5 933.2 321.4C933.7 327.3 933.1 335.1 933.7 339.2C934.2 343.4 935.1 344.1 936.5 346.1C937.8 348.1 939.8 349.8 941.7 351.4C943.6 352.9 945.7 354.3 947.8 355.5C950.0 356.7 952.2 358.0 954.5 358.8C956.8 359.6 958.6 360.9 961.6 360.3C964.7 359.8 969.0 356.7 972.8 355.5C976.6 354.2 980.9 352.0 984.5 352.9C988.1 353.8 991.6 357.8 994.5 360.9C997.4 364.0 1000.1 367.6 1001.9 371.3C1003.7 375.1 1005.8 378.9 1005.5 383.5C1005.1 388.1 1002.6 394.4 999.6 399.0C996.6 403.5 991.7 407.1 987.4 410.7C983.0 414.2 978.2 417.3 973.3 420.1C968.4 423.0 963.3 425.3 958.2 427.8C953.1 430.2 945.3 433.5 942.7 434.6"/>
<path d="M941.0 436.4C938.3 436.7 929.7 436.3 924.5 438.3C919.3 440.4 914.4 444.8 909.8 448.6C905.2 452.4 901.2 457.0 897.0 461.2C892.8 465.4 889.4 470.5 884.6 473.6C879.8 476.8 872.8 479.9 868.0 480.2C863.2 480.6 858.8 478.1 855.6 475.6C852.4 473.0 850.5 468.7 848.8 464.9C847.1 461.1 846.4 456.9 845.3 452.9C844.1 448.8 843.9 444.2 842.0 440.4C840.1 436.5 836.8 432.6 833.9 429.7C831.0 426.9 827.5 425.5 824.4 423.4C821.4 421.3 818.2 419.4 815.6 417.1C813.0 414.8 810.9 412.4 808.8 409.7C806.8 407.0 804.5 404.3 803.3 400.9C802.0 397.6 801.2 394.0 801.4 389.6C801.5 385.2 802.5 379.1 804.1 374.5C805.8 369.9 808.8 365.9 811.5 361.9C814.2 358.0 817.2 354.5 820.2 350.8C823.2 347.0 827.2 343.6 829.5 339.3C831.9 334.9 833.7 330.2 834.5 324.9C835.2 319.6 833.0 313.0 833.8 307.4C834.7 301.9 836.1 295.6 839.6 291.5C843.1 287.4 849.4 284.9 854.8 282.6C860.1 280.3 866.0 278.5 871.7 277.6C877.5 276.7 883.6 276.7 889.4 277.2C895.2 277.7 901.3 278.4 906.5 280.7C911.7 283.0 916.7 286.7 920.5 290.9C924.4 295.0 927.8 300.3 929.8 305.5C931.8 310.7 931.9 316.7 932.5 322.3C933.2 327.9 932.9 335.4 933.5 339.4C934.2 343.3 935.0 344.1 936.3 346.1C937.6 348.1 939.5 349.7 941.3 351.3C943.2 352.9 945.3 354.2 947.4 355.4C949.4 356.7 951.6 357.9 953.8 358.7C956.1 359.6 957.8 360.8 960.8 360.5C963.7 360.1 967.9 357.5 971.6 356.5C975.3 355.5 979.3 353.6 982.8 354.6C986.3 355.5 989.7 359.3 992.6 362.2C995.4 365.1 998.1 368.5 999.9 372.1C1001.8 375.7 1004.0 379.3 1003.7 383.7C1003.3 388.1 1000.8 394.3 997.8 398.8C994.9 403.2 990.2 406.7 985.9 410.2C981.7 413.6 977.0 416.7 972.3 419.5C967.6 422.3 962.6 424.7 957.6 427.1C952.6 429.5 945.0 432.8 942.5 433.9"/>
<path d="M941.0 436.8C938.5 437.3 930.7 437.4 926.0 439.5C921.2 441.6 916.6 445.9 912.3 449.5C908.0 453.1 904.0 457.2 899.9 461.0C895.8 464.8 892.5 469.3 887.8 472.1C883.2 475.0 876.7 477.7 872.0 478.0C867.3 478.2 863.0 476.0 859.8 473.6C856.6 471.2 854.6 467.2 852.7 463.7C850.9 460.2 849.9 456.3 848.6 452.5C847.3 448.7 846.8 444.4 844.8 440.7C842.9 437.0 839.7 433.1 836.9 430.3C834.0 427.5 830.7 425.9 827.8 423.7C824.9 421.4 822.0 419.3 819.7 416.9C817.3 414.5 815.7 412.0 814.0 409.3C812.2 406.5 810.4 403.7 809.4 400.4C808.4 397.0 807.7 393.5 807.8 389.2C808.0 384.8 808.9 378.9 810.3 374.4C811.8 369.8 814.3 365.9 816.6 362.0C818.9 358.0 821.5 354.6 824.1 350.8C826.8 347.0 830.3 343.5 832.5 339.2C834.6 335.0 836.4 330.2 837.1 325.1C837.9 320.1 836.0 314.0 836.9 308.8C837.8 303.6 839.2 297.8 842.5 293.9C845.9 290.0 851.8 287.7 856.8 285.5C861.9 283.3 867.3 281.7 872.8 280.8C878.2 280.0 883.9 279.9 889.4 280.4C894.9 280.9 900.9 281.6 905.9 283.8C910.9 285.9 915.7 289.5 919.5 293.4C923.3 297.3 926.6 302.3 928.6 307.3C930.7 312.2 931.1 317.8 931.9 323.2C932.7 328.6 932.7 335.7 933.4 339.5C934.1 343.3 934.9 344.1 936.1 346.1C937.4 348.0 939.2 349.7 941.0 351.2C942.8 352.8 944.9 354.1 946.9 355.4C948.9 356.6 951.0 357.8 953.2 358.7C955.3 359.6 957.0 360.8 959.9 360.6C962.8 360.4 966.8 358.2 970.3 357.5C973.9 356.7 977.8 355.2 981.2 356.2C984.6 357.2 987.8 360.8 990.6 363.5C993.4 366.3 996.1 369.5 998.0 372.9C999.8 376.3 1002.2 379.7 1001.9 383.9C1001.6 388.2 999.0 394.2 996.1 398.5C993.2 402.8 988.6 406.3 984.5 409.7C980.3 413.1 975.8 416.1 971.3 418.9C966.7 421.7 961.8 424.1 957.0 426.4C952.2 428.8 944.8 432.1 942.4 433.2"/>
<path d="M941.0 437.3C938.7 437.9 931.8 438.4 927.4 440.6C923.0 442.8 918.9 447.0 914.8 450.3C910.7 453.7 906.7 457.4 902.8 460.8C898.8 464.2 895.5 468.2 891.1 470.7C886.6 473.1 880.5 475.6 876.0 475.7C871.5 475.9 867.3 473.8 864.1 471.6C860.8 469.4 858.7 465.8 856.7 462.6C854.6 459.3 853.4 455.7 851.9 452.1C850.4 448.5 849.7 444.5 847.7 441.0C845.7 437.4 842.6 433.7 839.8 430.9C837.1 428.0 833.9 426.3 831.2 423.9C828.5 421.6 825.7 419.3 823.7 416.8C821.7 414.3 820.5 411.7 819.1 408.9C817.7 406.0 816.3 403.2 815.5 399.9C814.7 396.5 814.1 393.0 814.3 388.7C814.5 384.4 815.3 378.7 816.5 374.3C817.7 369.8 819.8 365.9 821.7 362.0C823.6 358.1 825.7 354.6 828.0 350.8C830.3 347.0 833.4 343.5 835.4 339.2C837.4 335.0 839.0 330.3 839.8 325.4C840.5 320.6 839.0 315.1 839.9 310.2C840.9 305.4 842.4 300.0 845.5 296.4C848.7 292.7 854.2 290.5 858.9 288.4C863.6 286.4 868.7 284.8 873.8 284.0C878.9 283.2 884.2 283.1 889.4 283.6C894.6 284.1 900.4 284.8 905.3 286.8C910.1 288.9 914.7 292.2 918.5 295.9C922.2 299.6 925.4 304.3 927.5 309.1C929.6 313.8 930.2 319.0 931.2 324.1C932.1 329.2 932.4 336.0 933.2 339.6C934.0 343.3 934.7 344.1 936.0 346.1C937.2 348.0 939.0 349.6 940.7 351.2C942.5 352.7 944.4 354.0 946.4 355.3C948.4 356.5 950.4 357.8 952.5 358.7C954.6 359.6 956.3 360.8 959.0 360.8C961.8 360.7 965.7 359.0 969.1 358.5C972.5 358.0 976.2 356.7 979.5 357.8C982.8 358.9 986.0 362.2 988.7 364.9C991.4 367.5 994.1 370.5 996.0 373.7C997.9 376.9 1000.4 380.1 1000.2 384.2C999.9 388.3 997.2 394.1 994.3 398.3C991.5 402.5 987.1 405.9 983.1 409.2C979.0 412.5 974.7 415.5 970.2 418.3C965.8 421.1 961.1 423.4 956.4 425.8C951.8 428.2 944.6 431.4 942.2 432.5"/>
<path d="M941.0 437.8C939.0 438.4 932.8 439.5 928.9 441.8C924.9 444.0 921.1 448.1 917.2 451.2C913.4 454.4 909.5 457.6 905.7 460.6C901.8 463.6 898.6 467.0 894.3 469.2C890.0 471.3 884.3 473.4 880.0 473.5C875.7 473.6 871.5 471.7 868.3 469.7C865.1 467.6 862.7 464.4 860.6 461.4C858.4 458.4 856.9 455.1 855.3 451.8C853.6 448.4 852.6 444.6 850.5 441.2C848.4 437.9 845.5 434.3 842.8 431.5C840.2 428.6 837.1 426.7 834.6 424.2C832.0 421.7 829.5 419.3 827.8 416.6C826.0 414.0 825.3 411.3 824.2 408.5C823.2 405.6 822.2 402.7 821.6 399.4C821.0 396.0 820.6 392.4 820.8 388.2C820.9 384.0 821.7 378.5 822.7 374.1C823.7 369.8 825.3 365.9 826.8 362.0C828.4 358.1 830.0 354.6 831.9 350.8C833.8 347.0 836.6 343.4 838.3 339.2C840.1 335.1 841.6 330.3 842.4 325.7C843.2 321.1 842.0 316.1 843.0 311.6C844.0 307.1 845.5 302.2 848.5 298.8C851.5 295.4 856.5 293.3 860.9 291.3C865.3 289.4 870.1 288.0 874.9 287.2C879.6 286.5 884.4 286.4 889.4 286.8C894.4 287.2 900.0 288.0 904.6 289.9C909.3 291.8 913.8 294.9 917.4 298.4C921.0 301.9 924.2 306.4 926.4 310.8C928.6 315.3 929.4 320.2 930.5 325.0C931.6 329.9 932.2 336.2 933.1 339.7C934.0 343.2 934.6 344.1 935.8 346.0C937.0 347.9 938.7 349.6 940.4 351.1C942.1 352.6 944.0 354.0 945.9 355.2C947.8 356.5 949.8 357.7 951.9 358.6C953.9 359.6 955.5 360.8 958.1 360.9C960.8 361.1 964.5 359.7 967.8 359.5C971.1 359.2 974.7 358.3 977.9 359.4C981.0 360.6 984.1 363.7 986.8 366.2C989.5 368.7 992.1 371.5 994.0 374.5C996.0 377.5 998.6 380.5 998.4 384.4C998.1 388.3 995.4 394.0 992.6 398.1C989.8 402.1 985.5 405.5 981.6 408.7C977.7 412.0 973.5 415.0 969.2 417.7C964.9 420.4 960.4 422.8 955.8 425.1C951.3 427.5 944.4 430.7 942.1 431.8"/>
<path d="M941.0 438.2C939.2 439.0 933.9 440.6 930.3 442.9C926.8 445.2 923.3 449.2 919.7 452.1C916.1 455.0 912.2 457.8 908.6 460.4C904.9 463.0 901.6 465.9 897.5 467.7C893.4 469.5 888.2 471.2 884.0 471.2C879.8 471.2 875.8 469.5 872.5 467.7C869.3 465.9 866.8 462.9 864.5 460.2C862.2 457.5 860.5 454.5 858.6 451.4C856.7 448.3 855.5 444.8 853.3 441.5C851.2 438.3 848.4 434.9 845.8 432.0C843.2 429.2 840.3 427.1 837.9 424.5C835.6 421.9 833.2 419.2 831.8 416.5C830.4 413.8 830.0 411.0 829.4 408.1C828.7 405.1 828.1 402.2 827.7 398.8C827.4 395.5 827.0 391.9 827.2 387.8C827.4 383.6 828.1 378.3 828.9 374.0C829.6 369.7 830.8 365.9 832.0 362.0C833.1 358.1 834.3 354.6 835.8 350.8C837.3 347.0 839.7 343.4 841.2 339.2C842.8 335.1 844.3 330.4 845.1 326.0C845.9 321.6 845.0 317.1 846.1 313.0C847.1 308.9 848.6 304.4 851.5 301.3C854.3 298.1 858.9 296.1 863.0 294.3C867.0 292.5 871.5 291.1 875.9 290.4C880.3 289.7 884.7 289.6 889.4 290.0C894.1 290.4 899.5 291.1 904.0 293.0C908.5 294.8 912.8 297.7 916.4 300.9C919.9 304.2 923.0 308.4 925.3 312.6C927.5 316.8 928.6 321.4 929.8 326.0C931.1 330.5 932.0 336.5 932.9 339.9C933.9 343.2 934.5 344.2 935.7 346.0C936.8 347.9 938.5 349.5 940.1 351.1C941.7 352.6 943.6 353.9 945.4 355.1C947.3 356.4 949.2 357.6 951.2 358.6C953.2 359.6 954.7 360.8 957.3 361.1C959.8 361.4 963.4 360.5 966.6 360.5C969.7 360.5 973.2 359.9 976.2 361.1C979.2 362.2 982.2 365.1 984.8 367.5C987.5 369.9 990.1 372.4 992.0 375.3C994.0 378.1 996.8 380.9 996.6 384.6C996.4 388.4 993.6 393.9 990.9 397.8C988.1 401.8 984.0 405.0 980.2 408.2C976.4 411.5 972.3 414.4 968.2 417.1C964.0 419.8 959.6 422.1 955.3 424.5C950.9 426.8 944.1 430.0 941.9 431.2"/>
<path d="M941.0 438.7C939.5 439.6 934.9 441.7 931.8 444.0C928.6 446.4 925.6 450.3 922.2 452.9C918.8 455.6 915.0 458.0 911.4 460.2C907.9 462.4 904.7 464.8 900.8 466.2C896.9 467.7 892.0 469.1 888.0 469.0C884.0 468.9 880.0 467.4 876.8 465.7C873.5 464.1 870.9 461.5 868.4 459.0C865.9 456.6 864.0 453.9 861.9 451.0C859.9 448.2 858.4 444.9 856.2 441.8C854.0 438.7 851.2 435.5 848.8 432.6C846.3 429.8 843.4 427.5 841.3 424.8C839.2 422.1 837.0 419.2 835.9 416.4C834.7 413.5 834.8 410.7 834.5 407.6C834.2 404.6 834.0 401.7 833.8 398.3C833.7 394.9 833.5 391.4 833.7 387.3C833.9 383.2 834.5 378.1 835.0 373.9C835.6 369.7 836.3 365.8 837.1 362.0C837.9 358.2 838.5 354.6 839.7 350.8C840.9 347.0 842.8 343.3 844.2 339.2C845.5 335.1 846.9 330.4 847.7 326.3C848.6 322.1 848.0 318.1 849.1 314.4C850.3 310.6 851.8 306.6 854.4 303.7C857.1 300.8 861.3 298.9 865.0 297.2C868.8 295.5 872.9 294.3 876.9 293.6C881.0 293.0 885.0 292.8 889.4 293.2C893.8 293.6 899.0 294.3 903.4 296.0C907.7 297.7 911.9 300.4 915.3 303.5C918.8 306.5 921.8 310.5 924.1 314.4C926.4 318.3 927.7 322.6 929.2 326.9C930.6 331.1 931.7 336.8 932.8 340.0C933.8 343.2 934.3 344.2 935.5 346.0C936.7 347.8 938.2 349.5 939.8 351.0C941.3 352.5 943.2 353.8 945.0 355.1C946.8 356.3 948.6 357.6 950.5 358.6C952.4 359.6 953.9 360.7 956.4 361.2C958.9 361.7 962.3 361.2 965.3 361.5C968.4 361.7 971.6 361.5 974.5 362.7C977.5 363.9 980.3 366.6 982.9 368.8C985.5 371.1 988.1 373.4 990.1 376.1C992.1 378.8 995.0 381.3 994.8 384.8C994.7 388.4 991.8 393.8 989.1 397.6C986.4 401.4 982.4 404.6 978.8 407.8C975.1 410.9 971.2 413.8 967.2 416.5C963.1 419.2 958.9 421.5 954.7 423.8C950.4 426.2 943.9 429.4 941.8 430.5"/>
<path d="M941.0 439.2C939.7 440.2 935.9 442.7 933.2 445.2C930.5 447.6 927.8 451.3 924.6 453.8C921.5 456.3 917.8 458.2 914.3 460.0C910.9 461.9 907.7 463.6 904.0 464.7C900.3 465.9 895.8 466.9 892.0 466.7C888.2 466.5 884.3 465.2 881.0 463.7C877.7 462.3 875.0 460.0 872.3 457.9C869.7 455.7 867.5 453.3 865.3 450.7C863.0 448.1 861.2 445.0 859.0 442.1C856.7 439.2 854.1 436.0 851.7 433.2C849.3 430.4 846.6 427.9 844.7 425.0C842.7 422.2 840.8 419.2 839.9 416.2C839.1 413.2 839.6 410.3 839.6 407.2C839.6 404.2 839.9 401.2 839.9 397.8C840.0 394.4 839.9 390.8 840.2 386.8C840.4 382.8 840.9 377.9 841.2 373.8C841.6 369.6 841.8 365.8 842.2 362.0C842.6 358.2 842.8 354.6 843.6 350.8C844.4 347.0 846.0 343.3 847.1 339.2C848.2 335.2 849.5 330.5 850.4 326.6C851.2 322.7 851.0 319.2 852.2 315.8C853.4 312.4 854.9 308.7 857.4 306.1C859.9 303.5 863.6 301.6 867.1 300.1C870.5 298.5 874.3 297.4 878.0 296.8C881.7 296.2 885.3 296.0 889.4 296.4C893.5 296.8 898.6 297.5 902.7 299.1C906.9 300.7 910.9 303.1 914.3 306.0C917.7 308.8 920.6 312.5 923.0 316.1C925.4 319.8 926.9 323.8 928.5 327.8C930.1 331.8 931.5 337.1 932.6 340.1C933.8 343.1 934.2 344.2 935.3 346.0C936.5 347.8 937.9 349.4 939.4 350.9C941.0 352.4 942.8 353.7 944.5 355.0C946.2 356.3 948.0 357.5 949.9 358.6C951.7 359.6 953.1 360.7 955.5 361.4C957.9 362.0 961.2 362.0 964.1 362.5C967.0 363.0 970.1 363.0 972.9 364.3C975.7 365.6 978.4 368.0 981.0 370.1C983.5 372.2 986.1 374.4 988.1 376.9C990.1 379.4 993.2 381.7 993.1 385.1C993.0 388.5 990.0 393.7 987.4 397.4C984.8 401.1 980.9 404.2 977.3 407.3C973.8 410.4 970.0 413.2 966.1 415.9C962.3 418.5 958.2 420.9 954.1 423.2C950.0 425.5 943.7 428.7 941.6 429.8"/>
<path d="M941.0 439.6C939.9 440.7 937.0 443.8 934.7 446.3C932.3 448.8 930.0 452.4 927.1 454.7C924.2 456.9 920.5 458.4 917.2 459.8C913.9 461.3 910.8 462.5 907.2 463.3C903.7 464.0 899.7 464.7 896.0 464.5C892.3 464.2 888.5 463.1 885.2 461.8C881.9 460.5 879.0 458.6 876.3 456.7C873.5 454.8 871.0 452.7 868.6 450.3C866.2 447.9 864.1 445.1 861.8 442.4C859.5 439.6 857.0 436.6 854.7 433.8C852.4 430.9 849.8 428.3 848.0 425.3C846.3 422.4 844.5 419.1 844.0 416.1C843.4 413.0 844.4 410.0 844.8 406.8C845.1 403.7 845.7 400.7 846.1 397.3C846.4 393.9 846.4 390.3 846.6 386.4C846.8 382.4 847.3 377.7 847.4 373.7C847.5 369.6 847.3 365.8 847.3 362.0C847.3 358.2 847.0 354.7 847.5 350.9C847.9 347.1 849.1 343.2 850.0 339.2C851.0 335.2 852.2 330.5 853.0 326.8C853.9 323.2 854.0 320.2 855.3 317.2C856.5 314.1 858.1 310.9 860.4 308.6C862.7 306.2 866.0 304.4 869.1 303.0C872.2 301.6 875.6 300.6 879.0 300.0C882.4 299.4 885.6 299.2 889.4 299.6C893.2 300.0 898.1 300.7 902.1 302.2C906.1 303.6 910.0 305.9 913.3 308.5C916.6 311.1 919.4 314.5 921.9 317.9C924.3 321.3 926.1 325.0 927.8 328.7C929.6 332.4 931.2 337.4 932.5 340.2C933.7 343.1 934.1 344.2 935.2 346.0C936.3 347.7 937.7 349.4 939.1 350.9C940.6 352.4 942.3 353.6 944.0 354.9C945.7 356.2 947.4 357.4 949.2 358.5C951.0 359.6 952.4 360.7 954.6 361.5C956.9 362.4 960.1 362.7 962.8 363.5C965.6 364.2 968.5 364.6 971.2 365.9C973.9 367.3 976.6 369.5 979.0 371.5C981.5 373.4 984.1 375.4 986.1 377.7C988.2 380.0 991.4 382.1 991.3 385.3C991.2 388.6 988.2 393.6 985.6 397.1C983.1 400.7 979.3 403.8 975.9 406.8C972.5 409.8 968.8 412.6 965.1 415.3C961.4 417.9 957.4 420.2 953.5 422.5C949.6 424.8 943.5 428.0 941.5 429.1"/>
<path d="M941.0 440.1C940.2 441.3 938.0 444.9 936.1 447.5C934.2 450.0 932.3 453.5 929.6 455.6C926.9 457.6 923.3 458.6 920.1 459.6C916.9 460.7 913.8 461.3 910.5 461.8C907.1 462.2 903.5 462.5 900.0 462.2C896.5 461.9 892.8 460.9 889.5 459.8C886.2 458.7 883.1 457.2 880.2 455.5C877.3 453.9 874.5 452.1 871.9 450.0C869.3 447.8 867.0 445.3 864.7 442.7C862.3 440.1 859.9 437.2 857.7 434.3C855.5 431.5 853.0 428.7 851.4 425.6C849.8 422.5 848.3 419.1 848.0 415.9C847.8 412.7 849.2 409.6 849.9 406.4C850.6 403.2 851.6 400.2 852.2 396.7C852.7 393.3 852.8 389.8 853.1 385.9C853.3 382.1 853.7 377.5 853.6 373.5C853.5 369.5 852.8 365.8 852.4 362.0C852.1 358.3 851.3 354.7 851.4 350.9C851.5 347.1 852.2 343.2 853.0 339.2C853.7 335.2 854.8 330.6 855.7 327.1C856.6 323.7 857.1 321.2 858.3 318.5C859.6 315.9 861.2 313.1 863.3 311.0C865.5 308.9 868.4 307.2 871.1 305.9C873.9 304.6 877.0 303.7 880.1 303.2C883.1 302.7 885.8 302.5 889.4 302.8C893.0 303.1 897.7 303.9 901.5 305.2C905.3 306.6 909.0 308.6 912.2 311.0C915.4 313.4 918.2 316.6 920.7 319.7C923.2 322.8 925.2 326.2 927.2 329.6C929.1 333.1 931.0 337.6 932.3 340.4C933.6 343.1 933.9 344.2 935.0 345.9C936.1 347.7 937.4 349.3 938.8 350.8C940.2 352.3 941.9 353.6 943.5 354.9C945.2 356.1 946.8 357.4 948.5 358.5C950.3 359.6 951.6 360.7 953.8 361.7C955.9 362.7 958.9 363.5 961.6 364.5C964.2 365.4 967.0 366.2 969.6 367.6C972.2 368.9 974.7 371.0 977.1 372.8C979.5 374.6 982.1 376.3 984.2 378.5C986.2 380.6 989.6 382.5 989.5 385.5C989.5 388.6 986.4 393.5 983.9 396.9C981.4 400.4 977.8 403.4 974.5 406.3C971.2 409.3 967.7 412.1 964.1 414.6C960.5 417.2 956.7 419.6 952.9 421.9C949.1 424.2 943.2 427.3 941.3 428.4"/>
<path d="M941.0 440.5C940.4 441.9 939.0 446.0 937.6 448.6C936.1 451.3 934.5 454.6 932.1 456.4C929.6 458.2 926.1 458.8 923.0 459.4C919.9 460.1 916.8 460.2 913.7 460.3C910.5 460.4 907.3 460.4 904.0 460.0C900.7 459.5 897.0 458.8 893.7 457.8C890.4 456.9 887.2 455.7 884.1 454.3C881.0 453.0 878.0 451.5 875.3 449.6C872.5 447.7 869.9 445.4 867.5 442.9C865.0 440.5 862.7 437.8 860.6 434.9C858.5 432.1 856.2 429.1 854.8 425.9C853.4 422.7 852.1 419.1 852.1 415.8C852.1 412.5 854.0 409.3 855.0 406.0C856.1 402.8 857.5 399.7 858.3 396.2C859.0 392.8 859.3 389.3 859.5 385.5C859.8 381.7 860.1 377.3 859.7 373.4C859.4 369.5 858.3 365.8 857.6 362.0C856.8 358.3 855.5 354.7 855.3 350.9C855.0 347.1 855.4 343.1 855.9 339.2C856.4 335.3 857.4 330.6 858.3 327.4C859.3 324.2 860.1 322.3 861.4 319.9C862.7 317.6 864.3 315.3 866.3 313.5C868.3 311.6 870.7 310.0 873.2 308.8C875.7 307.7 878.4 306.9 881.1 306.4C883.8 305.9 886.1 305.7 889.4 306.0C892.7 306.3 897.2 307.0 900.8 308.3C904.5 309.5 908.1 311.3 911.2 313.5C914.3 315.7 917.1 318.6 919.6 321.5C922.2 324.3 924.4 327.4 926.5 330.5C928.6 333.7 930.8 337.9 932.2 340.5C933.5 343.0 933.8 344.2 934.9 345.9C935.9 347.6 937.1 349.3 938.5 350.8C939.9 352.2 941.5 353.5 943.1 354.8C944.6 356.1 946.3 357.3 947.9 358.5C949.5 359.6 950.8 360.7 952.9 361.8C955.0 363.0 957.8 364.2 960.3 365.5C962.8 366.7 965.4 367.7 967.9 369.2C970.4 370.6 972.8 372.4 975.2 374.1C977.6 375.8 980.1 377.3 982.2 379.3C984.3 381.2 987.8 382.9 987.8 385.8C987.8 388.7 984.6 393.3 982.2 396.7C979.7 400.0 976.2 402.9 973.0 405.8C969.8 408.7 966.5 411.5 963.1 414.0C959.6 416.6 956.0 418.9 952.3 421.2C948.7 423.5 943.0 426.6 941.2 427.7"/>
<path d="M941.0 441.0C940.7 442.5 940.1 447.0 939.0 449.8C937.9 452.5 936.7 455.7 934.5 457.3C932.3 458.9 928.8 459.0 925.9 459.3C922.9 459.5 919.9 459.1 916.9 458.8C913.9 458.6 911.2 458.2 908.0 457.7C904.8 457.2 901.2 456.6 897.9 455.8C894.6 455.1 891.3 454.3 888.0 453.2C884.8 452.1 881.5 450.9 878.6 449.2C875.6 447.6 872.8 445.5 870.3 443.2C867.8 440.9 865.6 438.3 863.6 435.5C861.6 432.7 859.4 429.5 858.2 426.1C856.9 422.8 855.8 419.0 856.2 415.6C856.5 412.2 858.8 409.0 860.2 405.6C861.5 402.3 863.4 399.1 864.4 395.7C865.4 392.3 865.7 388.7 866.0 385.0C866.3 381.3 866.5 377.1 865.9 373.3C865.4 369.5 863.8 365.8 862.7 362.1C861.6 358.3 859.8 354.7 859.1 350.9C858.5 347.1 858.5 343.1 858.8 339.2C859.1 335.3 860.1 330.7 861.0 327.7C861.9 324.7 863.1 323.3 864.5 321.3C865.8 319.4 867.5 317.5 869.3 315.9C871.1 314.3 873.1 312.8 875.2 311.8C877.4 310.7 879.8 310.0 882.2 309.6C884.5 309.2 886.4 308.9 889.4 309.2C892.4 309.5 896.7 310.2 900.2 311.3C903.6 312.5 907.1 314.0 910.1 316.0C913.2 318.0 915.9 320.7 918.5 323.2C921.1 325.8 923.6 328.6 925.8 331.5C928.1 334.4 930.5 338.2 932.0 340.6C933.5 343.0 933.7 344.2 934.7 345.9C935.7 347.6 936.9 349.2 938.2 350.7C939.5 352.2 941.1 353.4 942.6 354.7C944.1 356.0 945.7 357.2 947.2 358.4C948.8 359.7 950.0 360.7 952.0 362.0C954.0 363.3 956.7 365.0 959.1 366.5C961.5 367.9 963.9 369.3 966.2 370.8C968.6 372.3 970.9 373.9 973.2 375.4C975.6 377.0 978.1 378.3 980.2 380.0C982.4 381.8 986.0 383.3 986.0 386.0C986.0 388.7 982.8 393.2 980.4 396.5C978.0 399.7 974.7 402.5 971.6 405.3C968.5 408.2 965.3 410.9 962.0 413.4C958.7 416.0 955.2 418.3 951.7 420.6C948.2 422.8 942.8 425.9 941.0 427.0"/>
<path d="M933.9 339.1C934.4 340.2 935.3 344.1 936.7 346.1C938.1 348.2 940.2 349.9 942.1 351.5C944.1 353.0 946.3 354.4 948.6 355.6C950.8 356.8 953.1 358.1 955.5 358.8C957.9 359.5 959.8 360.9 963.0 360.1C966.2 359.3 970.7 355.6 974.7 354.0C978.7 352.4 983.2 349.7 987.0 350.5C990.8 351.3 994.4 355.7 997.4 358.9C1000.4 362.2 1003.1 366.1 1004.9 370.1C1006.6 374.2 1008.6 378.3 1008.1 383.1C1007.7 388.0 1005.3 394.6 1002.2 399.3C999.1 404.0 994.1 407.8 989.5 411.4C984.9 415.0 979.9 418.2 974.8 421.0C969.8 423.9 964.4 426.3 959.1 428.7C953.7 431.2 945.6 434.5 942.9 435.7"/>
<path d="M933.8 339.2C934.2 340.3 935.2 344.1 936.5 346.1C937.9 348.2 939.9 349.8 941.8 351.4C943.7 353.0 945.9 354.3 948.1 355.5C950.2 356.8 952.5 358.0 954.8 358.8C957.2 359.5 959.0 360.9 962.1 360.2C965.2 359.6 969.6 356.3 973.4 355.0C977.3 353.6 981.6 351.2 985.3 352.1C989.0 353.0 992.5 357.1 995.5 360.2C998.4 363.4 1001.1 367.1 1002.9 370.9C1004.7 374.8 1006.8 378.7 1006.3 383.3C1005.9 388.0 1003.5 394.5 1000.4 399.1C997.4 403.7 992.5 407.3 988.1 410.9C983.6 414.5 978.7 417.6 973.8 420.4C968.9 423.3 963.7 425.7 958.5 428.1C953.3 430.5 945.4 433.8 942.8 435.0"/>
<path d="M933.6 339.3C934.1 340.4 935.1 344.1 936.4 346.1C937.7 348.1 939.6 349.8 941.5 351.3C943.4 352.9 945.5 354.2 947.6 355.5C949.7 356.7 951.9 357.9 954.2 358.7C956.4 359.6 958.2 360.8 961.2 360.4C964.2 359.9 968.5 357.1 972.2 356.0C975.9 354.9 980.1 352.8 983.7 353.8C987.2 354.7 990.7 358.6 993.5 361.6C996.4 364.6 999.1 368.1 1000.9 371.7C1002.8 375.4 1004.9 379.1 1004.6 383.6C1004.2 388.1 1001.7 394.4 998.7 398.9C995.7 403.3 991.0 406.9 986.6 410.4C982.3 413.9 977.6 417.0 972.8 419.8C968.0 422.7 962.9 425.0 957.9 427.4C952.9 429.8 945.2 433.1 942.6 434.3"/>
<path d="M933.5 339.4C933.9 340.5 934.9 344.1 936.2 346.1C937.5 348.1 939.4 349.7 941.2 351.3C943.0 352.8 945.1 354.2 947.1 355.4C949.2 356.6 951.3 357.9 953.5 358.7C955.7 359.6 957.4 360.8 960.3 360.5C963.2 360.2 967.3 357.8 971.0 357.0C974.6 356.1 978.6 354.4 982.0 355.4C985.4 356.4 988.8 360.0 991.6 362.9C994.4 365.7 997.1 369.0 998.9 372.5C1000.8 376.0 1003.1 379.5 1002.8 383.8C1002.5 388.2 999.9 394.3 997.0 398.6C994.0 403.0 989.4 406.5 985.2 409.9C981.0 413.4 976.4 416.4 971.8 419.2C967.1 422.0 962.2 424.4 957.3 426.8C952.4 429.2 944.9 432.4 942.5 433.6"/>
<path d="M933.3 339.6C933.8 340.6 934.8 344.1 936.1 346.1C937.3 348.0 939.1 349.7 940.9 351.2C942.6 352.8 944.6 354.1 946.6 355.3C948.6 356.6 950.7 357.8 952.8 358.7C955.0 359.6 956.6 360.8 959.5 360.7C962.3 360.6 966.2 358.6 969.7 358.0C973.2 357.4 977.0 356.0 980.3 357.0C983.7 358.0 986.9 361.5 989.7 364.2C992.4 366.9 995.1 370.0 997.0 373.3C998.9 376.6 1001.3 379.9 1001.0 384.0C1000.7 388.2 998.1 394.2 995.2 398.4C992.3 402.6 987.8 406.1 983.8 409.5C979.7 412.8 975.3 415.8 970.7 418.6C966.2 421.4 961.5 423.7 956.7 426.1C952.0 428.5 944.7 431.8 942.3 432.9"/>
<path d="M933.2 339.7C933.6 340.7 934.7 344.1 935.9 346.0C937.1 348.0 938.8 349.6 940.6 351.1C942.3 352.7 944.2 354.0 946.2 355.3C948.1 356.5 950.1 357.7 952.2 358.7C954.3 359.6 955.9 360.8 958.6 360.8C961.3 360.9 965.1 359.3 968.5 359.0C971.8 358.6 975.5 357.5 978.7 358.6C981.9 359.7 985.0 362.9 987.7 365.5C990.5 368.1 993.1 371.0 995.0 374.1C996.9 377.2 999.5 380.3 999.3 384.3C999.0 388.3 996.3 394.1 993.5 398.2C990.7 402.3 986.3 405.7 982.3 409.0C978.4 412.3 974.1 415.3 969.7 418.0C965.4 420.7 960.7 423.1 956.1 425.5C951.5 427.8 944.5 431.1 942.2 432.2"/>
<path d="M933.0 339.8C933.5 340.8 934.5 344.1 935.7 346.0C936.9 347.9 938.6 349.6 940.2 351.1C941.9 352.6 943.8 353.9 945.7 355.2C947.6 356.4 949.5 357.7 951.5 358.6C953.5 359.6 955.1 360.8 957.7 361.0C960.3 361.2 964.0 360.1 967.2 360.0C970.4 359.8 973.9 359.1 977.0 360.3C980.1 361.4 983.1 364.4 985.8 366.8C988.5 369.3 991.1 372.0 993.0 374.9C995.0 377.8 997.7 380.7 997.5 384.5C997.3 388.3 994.5 394.0 991.7 397.9C989.0 401.9 984.7 405.2 980.9 408.5C977.1 411.7 972.9 414.7 968.7 417.4C964.5 420.1 960.0 422.5 955.5 424.8C951.1 427.2 944.3 430.4 942.0 431.5"/>
<path d="M932.8 339.9C933.3 340.9 934.4 344.2 935.6 346.0C936.8 347.9 938.3 349.5 939.9 351.0C941.5 352.5 943.4 353.8 945.2 355.1C947.0 356.4 948.9 357.6 950.9 358.6C952.8 359.6 954.3 360.8 956.8 361.2C959.3 361.5 962.9 360.8 966.0 361.0C969.0 361.1 972.4 360.7 975.4 361.9C978.4 363.1 981.3 365.9 983.9 368.2C986.5 370.5 989.1 372.9 991.1 375.7C993.0 378.4 995.9 381.1 995.7 384.7C995.6 388.4 992.7 393.8 990.0 397.7C987.3 401.6 983.2 404.8 979.5 408.0C975.8 411.2 971.8 414.1 967.7 416.8C963.6 419.5 959.3 421.8 955.0 424.2C950.7 426.5 944.0 429.7 941.8 430.8"/>
<path d="M932.7 340.0C933.1 341.0 934.3 344.2 935.4 346.0C936.6 347.8 938.1 349.5 939.6 351.0C941.2 352.5 943.0 353.8 944.7 355.0C946.5 356.3 948.3 357.5 950.2 358.6C952.1 359.6 953.5 360.7 955.9 361.3C958.4 361.9 961.7 361.6 964.7 362.0C967.7 362.3 970.8 362.2 973.7 363.5C976.6 364.8 979.4 367.3 981.9 369.5C984.5 371.6 987.1 373.9 989.1 376.5C991.1 379.1 994.1 381.5 994.0 385.0C993.8 388.5 990.9 393.7 988.3 397.5C985.6 401.3 981.6 404.4 978.0 407.5C974.4 410.6 970.6 413.5 966.6 416.2C962.7 418.8 958.5 421.2 954.4 423.5C950.2 425.8 943.8 429.0 941.7 430.1"/>
<path d="M932.5 340.2C933.0 341.1 934.1 344.2 935.3 346.0C936.4 347.8 937.8 349.4 939.3 350.9C940.8 352.4 942.5 353.7 944.3 355.0C946.0 356.2 947.7 357.5 949.5 358.5C951.3 359.6 952.7 360.7 955.1 361.5C957.4 362.2 960.6 362.4 963.5 363.0C966.3 363.6 969.3 363.8 972.1 365.1C974.8 366.4 977.5 368.8 980.0 370.8C982.5 372.8 985.1 374.9 987.1 377.3C989.2 379.7 992.3 381.9 992.2 385.2C992.1 388.5 989.1 393.6 986.5 397.3C983.9 400.9 980.1 404.0 976.6 407.0C973.1 410.1 969.4 412.9 965.6 415.6C961.8 418.2 957.8 420.5 953.8 422.8C949.8 425.2 943.6 428.3 941.5 429.4"/>
<path d="M932.4 340.3C932.8 341.2 934.0 344.2 935.1 346.0C936.2 347.7 937.5 349.4 939.0 350.8C940.4 352.3 942.1 353.6 943.8 354.9C945.4 356.2 947.1 357.4 948.9 358.5C950.6 359.6 952.0 360.7 954.2 361.6C956.4 362.5 959.5 363.1 962.2 364.0C964.9 364.8 967.7 365.4 970.4 366.8C973.0 368.1 975.6 370.2 978.1 372.1C980.5 374.0 983.1 375.8 985.2 378.1C987.2 380.3 990.5 382.3 990.4 385.4C990.4 388.6 987.3 393.5 984.8 397.0C982.2 400.6 978.5 403.6 975.2 406.6C971.8 409.5 968.3 412.3 964.6 415.0C960.9 417.6 957.1 419.9 953.2 422.2C949.3 424.5 943.4 427.6 941.4 428.7"/>
<path d="M932.2 340.4C932.7 341.3 933.9 344.2 934.9 345.9C936.0 347.7 937.3 349.3 938.7 350.8C940.1 352.3 941.7 353.5 943.3 354.8C944.9 356.1 946.5 357.3 948.2 358.5C949.9 359.6 951.2 360.7 953.3 361.8C955.4 362.9 958.4 363.9 961.0 365.0C963.5 366.1 966.2 367.0 968.7 368.4C971.3 369.8 973.7 371.7 976.1 373.4C978.6 375.2 981.1 376.8 983.2 378.9C985.3 380.9 988.7 382.7 988.7 385.7C988.6 388.6 985.5 393.4 983.0 396.8C980.5 400.2 977.0 403.1 973.7 406.1C970.5 409.0 967.1 411.8 963.6 414.3C960.0 416.9 956.3 419.3 952.6 421.5C948.9 423.8 943.1 427.0 941.2 428.0"/>
<path d="M932.1 340.5C932.5 341.4 933.7 344.2 934.8 345.9C935.8 347.6 937.0 349.3 938.3 350.7C939.7 352.2 941.3 353.5 942.8 354.7C944.4 356.0 946.0 357.3 947.6 358.5C949.2 359.6 950.4 360.7 952.4 361.9C954.5 363.2 957.3 364.6 959.7 366.0C962.1 367.3 964.7 368.5 967.1 370.0C969.5 371.5 971.9 373.2 974.2 374.8C976.6 376.4 979.1 377.8 981.2 379.7C983.3 381.5 986.9 383.1 986.9 385.9C986.9 388.7 983.7 393.3 981.3 396.6C978.9 399.9 975.4 402.7 972.3 405.6C969.2 408.4 965.9 411.2 962.5 413.7C959.2 416.3 955.6 418.6 952.0 420.9C948.5 423.1 942.9 426.3 941.1 427.3"/>
  </g></svg>
  <!-- Elevate -->
  <svg class="abs" style="left:0;top:0" width="1600" height="757" viewBox="0 0 1600 757"><g fill="#000" fill-rule="evenodd">
    <path d="M871.200 387.800H902V396.800H882.400V407.200H899.800V416.200H882.400V427.400H902.400V436.800H871.200Z"/>
    <rect x="906.300" y="385.200" width="10.500" height="51.600"/>
    <path d="M955.03 422.15A16.65 16.25 0 1 0 952.70 429.65L947.50 425.65C943.40 430.30 932.90 430.80 932.00 422.15ZM932.00 416.95A6.55 4.7 0 0 1 945.10 416.95Z"/>
    <path d="M954.800 406.400H966L975 423L984 406.400H994.800L979.500 436.800H969.800Z"/>
    <path d="M1031.600 406.400V437.200H1021.500V435.400A16.600 16.250 0 1 1 1021.500 407.500V406.400ZM1006.700 421.450a7.700 7.950 0 1 0 15.400 0a7.700 7.950 0 1 0 -15.400 0Z"/>
    <path d="M1041.500 394.500H1051.800V406H1058.200V413.900H1051.800V427.500C1051.800 429.800 1053 430.600 1054.800 430.600C1056 430.600 1057.300 430.300 1058.600 429.800L1060 436C1057.800 437.200 1055 437.800 1052 437.800C1045.500 437.800 1041.500 434.300 1041.500 428V413.900H1036.700V406H1041.500Z"/>
    <path d="M1094.63 422.30A16.65 16.25 0 1 0 1092.30 429.80L1087.10 425.80C1083.00 430.45 1072.50 430.95 1071.60 422.30ZM1071.60 417.10A6.55 4.7 0 0 1 1084.70 417.10Z"/>
  </g></svg>
  <span class="t" style="left:864.500px;top:491.800px;font-size:19px;letter-spacing:2.480px;color:#1a1a1a;-webkit-text-stroke:.28px #f6f6f6">MARKETING AGENCY</span>
  <!-- selection -->
  <svg class="abs" style="left:760px;top:376px" width="444" height="90" viewBox="760 376 444 90"><rect x="769.500" y="385.450" width="425" height="71.900" fill="none" stroke="#8b3dff" stroke-width="1.700"/></svg>
  <div class="hd" style="left:764.500px;top:380.200px"></div><div class="hd" style="left:1189.300px;top:380.200px"></div>
  <div class="hd" style="left:764.500px;top:452.100px"></div><div class="hd" style="left:1189.300px;top:452.100px"></div>
  <div class="hp" style="left:766.500px;top:414px"></div><div class="hp" style="left:1191.500px;top:414px"></div>
  <!-- translate badge -->
  <div class="abs" style="left:910px;top:361px;width:20px;height:21px;border-radius:3px;background:#f3f3f3;box-shadow:0 0 1px rgba(0,0,0,.35)"></div>
  <svg class="abs" style="left:912px;top:363px" width="17" height="17" viewBox="0 0 17 17"><path d="M1 1.500h7.500l2.800 12.500H1Z" fill="#3c7be6"/><path d="M6.500 4.800h8.500v10.200H9.700Z" fill="#d9d9d9"/><path d="M9.700 15l1.600-1 -1.200-3.200Z" fill="#2b5fc0"/><circle cx="5" cy="7.200" r="2" stroke="#fff" stroke-width=".9" fill="none"/><path d="M10.300 8h4M12.300 7v1M11 8c.5 2 2 3.500 3.300 4M13.800 8c-.5 2-2 3.500-3.300 4" stroke="#777" stroke-width=".7" fill="none"/></svg>
  <!-- rotate handle -->
  <div class="abs" style="left:972px;top:485.500px;width:20px;height:20px;border-radius:50%;background:#fff;box-shadow:0 0 2px rgba(0,0,0,.3)"></div>
  <svg class="abs" style="left:977px;top:490.500px" width="10" height="10" viewBox="0 0 12 12"><path d="M2.300 5.200A3.800 3.800 0 0 1 9 3.300M9.700 6.800A3.800 3.800 0 0 1 3 8.700M9.200 1.300v2.300H6.900M2.800 10.700V8.400h2.300" stroke="#222" stroke-width="1.500" fill="none" stroke-linecap="round" stroke-linejoin="round"/></svg>
  <!-- comment button -->
  <div class="abs" style="left:1231.500px;top:385.500px;width:33px;height:33px;border-radius:50%;background:#fff;box-shadow:0 1px 4px rgba(40,44,60,.22),0 0 1px rgba(0,0,0,.2)"></div>
  <svg class="abs" style="left:1239px;top:393px" width="19" height="19" viewBox="0 0 19 19"><path d="M11.500 2.500H8.200a6 6 0 0 0-1.600 11.800v2.200l3.300-2h.7a6 6 0 0 0 5.900-5" stroke="#0d1216" stroke-width="1.500" stroke-linecap="round" stroke-linejoin="round" fill="none"/><path d="M15.300 1.300v5M12.800 3.800h5" stroke="#0d1216" stroke-width="1.400" stroke-linecap="round"/></svg>
  <!-- page icons -->
  <svg class="abs" style="left:1146px;top:110px" width="14" height="17" viewBox="0 0 14 17"><rect x="1.700" y="7.500" width="10.600" height="7.900" rx="1.700" stroke="#4f5258" stroke-width="1.150" fill="none"/><path d="M3.300 7.300V5.300a3.700 3.700 0 0 1 7.300-1" stroke="#4f5258" stroke-width="1.150" stroke-linecap="round" fill="none"/><path d="M7 10.300v2.300" stroke="#4f5258" stroke-width="1.500" stroke-linecap="round"/></svg>
  <svg class="abs" style="left:1175px;top:111px" width="16" height="16" viewBox="0 0 16 16"><rect x="6.300" y="5.300" width="8.200" height="8.800" rx="1.600" stroke="#4f5258" stroke-width="1.150" fill="none"/><path d="M4.200 11.200A1.800 1.800 0 0 1 2.300 9.400V3.800A1.800 1.800 0 0 1 4.100 2h4.200a1.800 1.800 0 0 1 1.800 1.600" stroke="#4f5258" stroke-width="1.150" fill="none" stroke-linecap="round"/><path d="M10.400 7.700v4M8.400 9.700h4" stroke="#4f5258" stroke-width="1.150" stroke-linecap="round"/></svg>
  <svg class="abs" style="left:1205px;top:110px" width="16" height="17" viewBox="0 0 16 17"><path d="M4.300 4.100A1.900 1.900 0 0 0 2.400 6v6.100A1.900 1.900 0 0 0 4.300 14h6.200a1.900 1.900 0 0 0 1.900-1.900" stroke="#4f5258" stroke-width="1.150" fill="none" stroke-linecap="round"/><path d="M10.200 2.200v8M6.300 6.200h7.800" stroke="#4f5258" stroke-width="1.150" stroke-linecap="round"/></svg>
  <!-- add page -->
  <div class="abs" style="left:722px;top:657px;width:503px;height:33px;border-radius:4px;background:#e0e1e6"></div>
  <span class="t" style="left:920.500px;top:667px;font-size:13px;color:#2a2d33;letter-spacing:-0.300px;-webkit-text-stroke:.3px #2a2d33">+ Ajouter une page</span>
  <!-- magic button -->
  <div class="abs" style="left:1544px;top:667.500px;width:37px;height:37px;border-radius:50%;background:linear-gradient(135deg,#19c6dc 10%,#3f7fe8 50%,#8238ef 90%);box-shadow:0 2px 8px rgba(60,64,90,.18)"></div>
  <div class="abs" style="left:1546px;top:669.500px;width:33px;height:33px;border-radius:50%;background:#fff"></div>
  <svg class="abs" style="left:1552px;top:675px" width="22" height="22" viewBox="0 0 22 22"><defs><linearGradient id="mg" x1="0" y1="0" x2="1" y2="1"><stop offset="0" stop-color="#3f8fe8"/><stop offset="1" stop-color="#5b45e0"/></linearGradient></defs><g fill="url(#mg)"><path d="M10.800 4.600c.8 4 2.700 5.900 6.700 6.700-4 .8-5.900 2.700-6.700 6.700-.8-4-2.700-5.900-6.700-6.700 4-.8 5.900-2.700 6.700-6.700Z"/><path d="M5 2.800c.35 1.700 1.100 2.450 2.800 2.800-1.700.35-2.450 1.100-2.800 2.800-.35-1.700-1.100-2.450-2.800-2.800 1.700-.35 2.450-1.100 2.800-2.800Z"/><circle cx="16.300" cy="5.500" r="1.500"/><circle cx="5.400" cy="16.400" r="1.500"/></g></svg>
  <!-- scroll arrows -->
  <svg class="abs" style="left:1589px;top:92px" width="8" height="5" viewBox="0 0 8 5"><path d="M.5 4.500 4 .800 7.500 4.500Z" fill="#c9cad0"/></svg>
  <svg class="abs" style="left:1589.500px;top:700px" width="8" height="5" viewBox="0 0 8 5"><path d="M.5 .500 4 4.200 7.500 .500Z" fill="#c9cad0"/></svg>
  <svg class="abs" style="left:364px;top:714px" width="5" height="8" viewBox="0 0 5 8"><path d="M4.500 .5 .800 4 4.500 7.500Z" fill="#d3d4d9"/></svg>
  <svg class="abs" style="left:1577px;top:713.500px" width="5" height="8" viewBox="0 0 5 8"><path d="M.5 .5 4.200 4 .5 7.500Z" fill="#d3d4d9"/></svg>
  <!-- pull tab -->
  <svg class="abs" style="left:946px;top:713.800px" width="69" height="12" viewBox="0 0 69 12"><path d="M0 11.300C8.500 11.300 10 1 18.500 1H50C58.500 1 60 11.300 68.500 11.300V12H0Z" fill="#fff"/><path d="M32 9.400 34.600 6.800 37.200 9.400" stroke="#0d1216" stroke-width="1.600" fill="none" stroke-linecap="round" stroke-linejoin="round"/></svg>
  <!-- collapse handle of side panel -->
  <svg class="abs" style="left:360px;top:369px" width="12" height="68" viewBox="0 0 12 68"><path d="M0 0C0 9 10.500 11 10.500 21V47C10.500 57 0 59 0 68Z" fill="#252627"/><path d="M5.700 31 3.200 34l2.500 3" stroke="#fff" stroke-width="1.400" fill="none" stroke-linecap="round" stroke-linejoin="round"/></svg>
</div>

<!-- FOOTER CONTENT (page coords) -->
<div id="ftx" class="abs" style="left:0;top:0;width:0;height:0">
  <svg class="abs" style="left:373px;top:735px" width="16" height="15" viewBox="0 0 16 15"><path d="M1.500 2h9.300M1.500 5.400h5.500M1.500 8.900h2.500M1.500 12h.6" stroke="#0d1216" stroke-width="1.400" stroke-linecap="round"/><path d="M6 12.700l.8-2.700 5.600-5.600a1.200 1.200 0 0 1 1.900 1.800l-5.600 5.600Z" stroke="#0d1216" stroke-width="1.300" stroke-linejoin="round" fill="none"/></svg>
  <span class="t tt" style="left:393.500px;top:734.600px;letter-spacing:-0.100px">Notes</span>
  <span class="t tt" style="left:1187px;top:734.600px;letter-spacing:-0.800px">Page 1 / 1</span>
  <div class="abs" style="left:1252px;top:732px;width:1px;height:20px;background:#dfe0e4"></div>
  <div class="abs" style="left:1267px;top:741px;width:166px;height:2px;border-radius:1px;background:#e2e3e7"></div>
  <div class="abs" style="left:1267px;top:741px;width:105px;height:2px;border-radius:1px;background:#8e9197"></div>
  <div class="abs" style="left:1367px;top:737px;width:10px;height:10px;border-radius:50%;background:#0d1216"></div>
  <span class="t tt" style="left:1451px;top:734.600px;letter-spacing:-1px">121 %</span>
  <svg class="abs" style="left:1507px;top:734px" width="15" height="15" viewBox="0 0 15 15"><g stroke="#0d1216" stroke-width="1.400" fill="none"><rect x="1" y="1" width="5" height="5" rx="1"/><rect x="9" y="1" width="5" height="5" rx="1"/><rect x="1" y="9" width="5" height="5" rx="1"/><rect x="9" y="9" width="5" height="5" rx="1"/></g></svg>
  <svg class="abs" style="left:1540px;top:734px" width="15" height="15" viewBox="0 0 15 15"><path d="M9.200 1.200h4.600v4.600M13.500 1.500 8.800 6.200M5.800 13.800H1.200V9.200M1.500 13.500l4.700-4.700" stroke="#0d1216" stroke-width="1.400" fill="none" stroke-linecap="round" stroke-linejoin="round"/></svg>
  <svg class="abs" style="left:1572px;top:733px" width="17" height="17" viewBox="0 0 17 17"><circle cx="8.500" cy="8.500" r="7.300" stroke="#0d1216" stroke-width="1.400" fill="none"/><path d="M6.300 6.700a2.200 2.200 0 1 1 3.300 1.900c-.7.400-1.100.8-1.100 1.600" stroke="#0d1216" stroke-width="1.400" fill="none" stroke-linecap="round"/><circle cx="8.500" cy="12.400" r=".9" fill="#0d1216"/></svg>
</div>

</body>
</html>
